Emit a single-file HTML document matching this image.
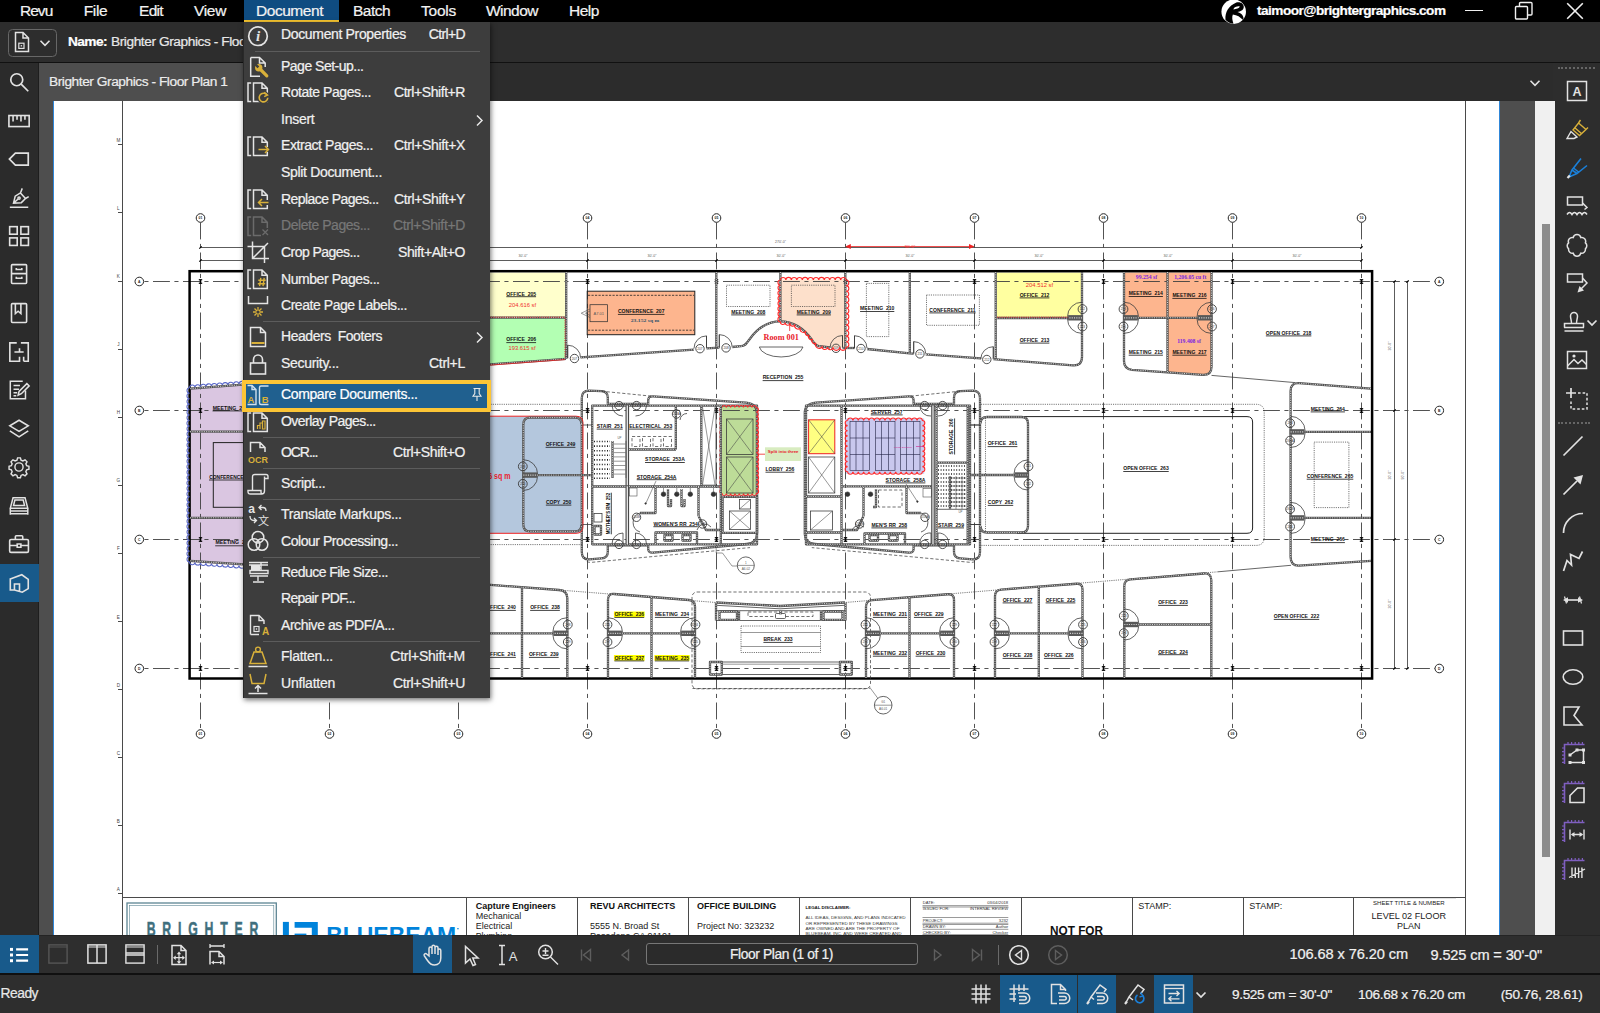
<!DOCTYPE html>
<html lang="en"><head><meta charset="utf-8"><title>Revu</title>
<style>
html,body{margin:0;padding:0;background:#2d2d2d;overflow:hidden}
body{width:1600px;height:1013px;position:relative;font-family:"Liberation Sans",sans-serif;color:#e6e6e6}
div,span,svg{position:absolute}
.t{white-space:pre;-webkit-text-stroke:.22px currentColor}
#mb{left:0;top:0;width:1600px;height:22px;background:#000}
#tb{left:0;top:22px;width:1600px;height:40px;background:#2d2d2d;border-bottom:1px solid #111}
#ls{left:0;top:63px;width:37.6px;height:873px;background:#2b2b2b;border-right:1px solid #1e1e1e}
#tabs{left:39px;top:63px;width:1514px;height:38px;background:#2c2c2c}
#tab{left:38.6px;top:62.8px;width:205px;height:38.2px;background:#4e4e4e}
#doc{left:38.6px;top:101px;width:1496.4px;height:834px;background:#4e4e4e;overflow:hidden}
#page{left:14px;top:0;width:1445.4px;height:835px;background:#fff;border-left:1.4px solid #2f86d8;border-right:1.2px solid #2f86d8}
#plan{left:-38.6px;top:-101px}
#sb{left:1535px;top:101px;width:20px;height:835px;background:#f0f0f0}
#sbt{left:6.5px;top:122.5px;width:8px;height:633px;background:#8c8c8c}
#rs{left:1555px;top:63px;width:45px;height:873px;background:#2d2d2d}
#bt{left:0;top:935px;width:1600px;height:37px;background:#2e2e2e;border-top:1px solid #242424;border-bottom:2px solid #101010}
#st{left:0;top:975px;width:1600px;height:38px;background:#2e2e2e}

.pl line,.pl path,.pl rect,.pl circle{fill:none;stroke:#333;stroke-width:.6}
.pl .n{stroke:none}
.pl .t{stroke:#444;stroke-width:.55}
.pl .t2{stroke:#333;stroke-width:.75}
.pl .t3{stroke:#222;stroke-width:1}
.pl .w{stroke:#505050;stroke-width:2.3;stroke-linejoin:round}
.pl .wh{stroke:#fff;stroke-width:.85;stroke-dasharray:1.1 1.2;fill:none;opacity:.9}
.pl .w2{stroke:#484848;stroke-width:3.6}
.pl .wh2{stroke:#fff;stroke-width:1.3;opacity:.9}
.pl .ws{stroke:#585858;stroke-width:5.4}
.pl .wsi{stroke:#d0d0d0;stroke-width:1.2;stroke-dasharray:1.1 1.2}
.pl .bo{stroke:#000;stroke-width:2.5}
.pl .d{stroke:#333;stroke-width:.7;stroke-dasharray:1.1 1.1}
.pl .d2{stroke:#222;stroke-width:1.6;stroke-dasharray:1 1.6}
.pl .da{stroke:#333;stroke-width:.7;stroke-dasharray:3.2 2}
.pl .dk{stroke:#224;stroke-width:.6}
.pl .g{stroke:#404040;stroke-width:.9;stroke-dasharray:16.9 4.5 4.1 4.5}
.pl .gc{stroke:#262626;stroke-width:1;fill:#fff}
.pl .tg{stroke:#3a3a3a;stroke-width:.9;fill:none}
.pl .dr{stroke:#3c3c3c;stroke-width:.8;fill:none}
.pl .tk{stroke:#000;stroke-width:1.15}
.pl .k{fill:#333;stroke:#333}
.pl .tk2{stroke:#000;stroke-width:1.6}
.pl .dm{stroke:#4a4a4a;stroke-width:.9}
.pl .fr{stroke:#4a4a4a;stroke-width:1}
.pl .tl{stroke:#555;stroke-width:.6}
.pl .u{stroke:#111;stroke-width:.8}
.pl .rd{stroke:#e22;stroke-width:.8}
.pl .rdd{stroke:#d22;stroke-width:.9;stroke-dasharray:1.2 1}
.pl .da2{stroke:#222;stroke-width:.8;stroke-dasharray:2.2 1.3}
.pl .rd2{stroke:#e22;stroke-width:1}
.pl .rf{fill:#e22;stroke:none}
.pl .rc{stroke:#ff2a2a;stroke-width:1.1}
.pl .bc{stroke:#5a68c8;stroke-width:1.05}
.pl .mgl{stroke:#d0208a;stroke-width:.6}
.pl .lg{stroke:#5d8593;stroke-width:1.3}
.pl .lg2{stroke:#5d8593;stroke-width:.6}
.pl .bb{fill:#0083db;stroke:none}

.pl text{white-space:pre;font-family:"Liberation Sans",sans-serif;fill:#222;stroke:none}
.pl .lb{font-weight:700;fill:#111}
.pl .gr{fill:#5a5a5a}
.pl .rl{fill:#444}
.pl .gn{fill:#222;font-weight:700}
.pl .tn{fill:#444}
.pl .rs{fill:#f03030}
.pl .rt{fill:#f03030}
.pl .rb{fill:#e8202a;font-weight:700}
.pl .rb2{fill:#e8202a;font-weight:700}
.pl .rm{fill:#e8202a;font-weight:700;font-family:"Liberation Serif",serif}
.pl .bs{fill:#33566e;font-weight:700;font-family:"Liberation Serif",serif}
.pl .pu{fill:#7a1fe0;font-weight:700;font-family:"Liberation Serif",serif}
.pl .mg{fill:#d0208a}
.pl .br{fill:#3f6f7e;font-weight:700;stroke:#3f6f7e;stroke-width:.5}
.pl .bbt{fill:#0083db;font-weight:700}
.pl .tbb{font-weight:700;fill:#111}
.pl .tbr{fill:#222}
.pl .tbs{fill:#333}

.ic{overflow:visible}
.bl{background:#185a8b}

#menu{left:243px;top:22px;width:246px;height:675.5px;background:#3d3d3d;border-left:1px solid #292929;box-shadow:1px 2px 5px rgba(0,0,0,.55)}
.mi{overflow:visible}

.sep{height:1px;background:#5c5c5c}
</style></head>
<body>
<div id="mb"></div><div id="tb"></div><div id="ls"></div><div id="tabs"></div><div id="tab"></div>
<div id="doc"><div id="page"></div><div id="plan"><svg class="pl" width="1600" height="1013" viewBox="0 0 1600 1013"><line class="fr" x1="122.5" y1="101" x2="122.5" y2="936"/>
<line class="fr" x1="1465.5" y1="101" x2="1465.5" y2="936"/>
<line class="fr" x1="122" y1="897.5" x2="1465" y2="897.5"/>
<line class="fr" x1="118" y1="144.5" x2="122" y2="144.5"/>
<text class="rl" x="118.3" y="141.8" font-size="4.6" text-anchor="middle">M</text>
<line class="fr" x1="118" y1="212.5" x2="122" y2="212.5"/>
<text class="rl" x="118.3" y="209.9" font-size="4.6" text-anchor="middle">L</text>
<line class="fr" x1="118" y1="281.5" x2="122" y2="281.5"/>
<text class="rl" x="118.3" y="278" font-size="4.6" text-anchor="middle">K</text>
<line class="fr" x1="118" y1="349.5" x2="122" y2="349.5"/>
<text class="rl" x="118.3" y="346.1" font-size="4.6" text-anchor="middle">J</text>
<line class="fr" x1="118" y1="417.5" x2="122" y2="417.5"/>
<text class="rl" x="118.3" y="414.2" font-size="4.6" text-anchor="middle">H</text>
<line class="fr" x1="118" y1="485.5" x2="122" y2="485.5"/>
<text class="rl" x="118.3" y="482.3" font-size="4.6" text-anchor="middle">G</text>
<line class="fr" x1="118" y1="553.5" x2="122" y2="553.5"/>
<text class="rl" x="118.3" y="550.4" font-size="4.6" text-anchor="middle">F</text>
<line class="fr" x1="118" y1="621.5" x2="122" y2="621.5"/>
<text class="rl" x="118.3" y="618.5" font-size="4.6" text-anchor="middle">E</text>
<line class="fr" x1="118" y1="689.5" x2="122" y2="689.5"/>
<text class="rl" x="118.3" y="686.6" font-size="4.6" text-anchor="middle">D</text>
<line class="fr" x1="118" y1="757.5" x2="122" y2="757.5"/>
<text class="rl" x="118.3" y="754.7" font-size="4.6" text-anchor="middle">C</text>
<line class="fr" x1="118" y1="825.5" x2="122" y2="825.5"/>
<text class="rl" x="118.3" y="822.8" font-size="4.6" text-anchor="middle">B</text>
<line class="fr" x1="118" y1="893.5" x2="122" y2="893.5"/>
<text class="rl" x="118.3" y="890.9" font-size="4.6" text-anchor="middle">A</text>
<g class="fill">
<path class="n" d="M189.5 387.8 L272 381.6 L272 568 L189.5 562 Z" style="fill:#dac6e1"/>
<rect class="n" x="484" y="272.5" width="81.3" height="44.8" style="fill:#ffffcc"/>
<path class="n" d="M484 317.3 L565.3 317.3 L565.3 359 L484 365 Z" style="fill:#b3ffb3"/>
<rect class="n" x="587.2" y="291.2" width="107.6" height="43.5" style="fill:#fdb58e"/>
<path class="n" d="M780.4 279.5 L846.2 279.5 L846.2 347.5 L822 347.5 C815.5 346 814.5 343.5 812 340 C804 328.5 793 321.4 780.4 321.4 Z" style="fill:#fde0cb"/>
<rect class="n" x="997" y="272.5" width="84" height="44.5" style="fill:#ffffa0"/>
<rect class="n" x="1124" y="272.5" width="87" height="45" style="fill:#fdb58e"/>
<path class="n" d="M1168 318 L1211 318 L1211 368 Q1211 375 1204 374.5 L1168 372 Z" style="fill:#fdb58e"/>
<path class="n" d="M484 416.2 L576 416.2 Q583 416.2 583 423 L583 526.5 Q583 533.3 576 533.3 L484 533.3 Z" style="fill:#b4c7dd"/>
<rect class="n" x="720.8" y="405.7" width="36.5" height="89.1" rx="3" style="fill:#bddc98"/>
<rect class="n" x="808.6" y="419.8" width="26.2" height="33.9" style="fill:#ffff82"/>
<rect class="n" x="845.6" y="418.5" width="78.6" height="55.2" style="fill:#c9c8ee"/>
<rect class="n" x="765" y="447.3" width="36" height="13.7" style="fill:#d8ecc0"/>
</g>
<line class="g" x1="200.5" y1="222.5" x2="200.5" y2="729.5"/>
<circle class="gc" cx="200.5" cy="218" r="4.3"/>
<circle class="gc" cx="200.5" cy="734" r="4.3"/>
<text class="gn" x="200.5" y="219.2" font-size="3.4" text-anchor="middle">01</text>
<text class="gn" x="200.5" y="735.2" font-size="3.4" text-anchor="middle">01</text>
<line class="g" x1="329.5" y1="222.5" x2="329.5" y2="729.5"/>
<circle class="gc" cx="329.5" cy="218" r="4.3"/>
<circle class="gc" cx="329.5" cy="734" r="4.3"/>
<text class="gn" x="329.5" y="219.2" font-size="3.4" text-anchor="middle">02</text>
<text class="gn" x="329.5" y="735.2" font-size="3.4" text-anchor="middle">02</text>
<line class="g" x1="458.5" y1="222.5" x2="458.5" y2="729.5"/>
<circle class="gc" cx="458.5" cy="218" r="4.3"/>
<circle class="gc" cx="458.5" cy="734" r="4.3"/>
<text class="gn" x="458.5" y="219.2" font-size="3.4" text-anchor="middle">03</text>
<text class="gn" x="458.5" y="735.2" font-size="3.4" text-anchor="middle">03</text>
<line class="g" x1="587.5" y1="222.5" x2="587.5" y2="729.5"/>
<circle class="gc" cx="587.5" cy="218" r="4.3"/>
<circle class="gc" cx="587.5" cy="734" r="4.3"/>
<text class="gn" x="587.5" y="219.2" font-size="3.4" text-anchor="middle">04</text>
<text class="gn" x="587.5" y="735.2" font-size="3.4" text-anchor="middle">04</text>
<line class="g" x1="716.5" y1="222.5" x2="716.5" y2="729.5"/>
<circle class="gc" cx="716.5" cy="218" r="4.3"/>
<circle class="gc" cx="716.5" cy="734" r="4.3"/>
<text class="gn" x="716.5" y="219.2" font-size="3.4" text-anchor="middle">05</text>
<text class="gn" x="716.5" y="735.2" font-size="3.4" text-anchor="middle">05</text>
<line class="g" x1="845.5" y1="222.5" x2="845.5" y2="729.5"/>
<circle class="gc" cx="845.5" cy="218" r="4.3"/>
<circle class="gc" cx="845.5" cy="734" r="4.3"/>
<text class="gn" x="845.5" y="219.2" font-size="3.4" text-anchor="middle">06</text>
<text class="gn" x="845.5" y="735.2" font-size="3.4" text-anchor="middle">06</text>
<line class="g" x1="974.5" y1="222.5" x2="974.5" y2="729.5"/>
<circle class="gc" cx="974.5" cy="218" r="4.3"/>
<circle class="gc" cx="974.5" cy="734" r="4.3"/>
<text class="gn" x="974.5" y="219.2" font-size="3.4" text-anchor="middle">07</text>
<text class="gn" x="974.5" y="735.2" font-size="3.4" text-anchor="middle">07</text>
<line class="g" x1="1103.5" y1="222.5" x2="1103.5" y2="729.5"/>
<circle class="gc" cx="1103.5" cy="218" r="4.3"/>
<circle class="gc" cx="1103.5" cy="734" r="4.3"/>
<text class="gn" x="1103.5" y="219.2" font-size="3.4" text-anchor="middle">08</text>
<text class="gn" x="1103.5" y="735.2" font-size="3.4" text-anchor="middle">08</text>
<line class="g" x1="1232.5" y1="222.5" x2="1232.5" y2="729.5"/>
<circle class="gc" cx="1232.5" cy="218" r="4.3"/>
<circle class="gc" cx="1232.5" cy="734" r="4.3"/>
<text class="gn" x="1232.5" y="219.2" font-size="3.4" text-anchor="middle">09</text>
<text class="gn" x="1232.5" y="735.2" font-size="3.4" text-anchor="middle">09</text>
<line class="g" x1="1361.5" y1="222.5" x2="1361.5" y2="729.5"/>
<circle class="gc" cx="1361.5" cy="218" r="4.3"/>
<circle class="gc" cx="1361.5" cy="734" r="4.3"/>
<text class="gn" x="1361.5" y="219.2" font-size="3.4" text-anchor="middle">10</text>
<text class="gn" x="1361.5" y="735.2" font-size="3.4" text-anchor="middle">10</text>
<line class="g" x1="144" y1="281.5" x2="1435" y2="281.5" stroke-dashoffset="21"/>
<circle class="gc" cx="139.3" cy="281.5" r="4.3"/>
<circle class="gc" cx="1439.3" cy="281.5" r="4.3"/>
<text class="gn" x="139.3" y="282.7" font-size="3.4" text-anchor="middle">A</text>
<text class="gn" x="1439.3" y="282.7" font-size="3.4" text-anchor="middle">A</text>
<line class="g" x1="144" y1="410.5" x2="1435" y2="410.5" stroke-dashoffset="21"/>
<circle class="gc" cx="139.3" cy="410.5" r="4.3"/>
<circle class="gc" cx="1439.3" cy="410.5" r="4.3"/>
<text class="gn" x="139.3" y="411.7" font-size="3.4" text-anchor="middle">B</text>
<text class="gn" x="1439.3" y="411.7" font-size="3.4" text-anchor="middle">B</text>
<line class="g" x1="144" y1="539.5" x2="1435" y2="539.5" stroke-dashoffset="21"/>
<circle class="gc" cx="139.3" cy="539.5" r="4.3"/>
<circle class="gc" cx="1439.3" cy="539.5" r="4.3"/>
<text class="gn" x="139.3" y="540.7" font-size="3.4" text-anchor="middle">C</text>
<text class="gn" x="1439.3" y="540.7" font-size="3.4" text-anchor="middle">C</text>
<line class="g" x1="144" y1="668.5" x2="1435" y2="668.5" stroke-dashoffset="21"/>
<circle class="gc" cx="139.3" cy="668.5" r="4.3"/>
<circle class="gc" cx="1439.3" cy="668.5" r="4.3"/>
<text class="gn" x="139.3" y="669.7" font-size="3.4" text-anchor="middle">D</text>
<text class="gn" x="1439.3" y="669.7" font-size="3.4" text-anchor="middle">D</text>
<line class="tk" x1="198.8" y1="279.7" x2="202.2" y2="279.7"/>
<line class="tk" x1="198.8" y1="283.3" x2="202.2" y2="283.3"/>
<line class="tk2" x1="200.5" y1="279.7" x2="200.5" y2="283.3"/>
<line class="tk" x1="198.8" y1="408.7" x2="202.2" y2="408.7"/>
<line class="tk" x1="198.8" y1="412.3" x2="202.2" y2="412.3"/>
<line class="tk2" x1="200.5" y1="408.7" x2="200.5" y2="412.3"/>
<line class="tk" x1="198.8" y1="537.7" x2="202.2" y2="537.7"/>
<line class="tk" x1="198.8" y1="541.3" x2="202.2" y2="541.3"/>
<line class="tk2" x1="200.5" y1="537.7" x2="200.5" y2="541.3"/>
<line class="tk" x1="198.8" y1="666.7" x2="202.2" y2="666.7"/>
<line class="tk" x1="198.8" y1="670.3" x2="202.2" y2="670.3"/>
<line class="tk2" x1="200.5" y1="666.7" x2="200.5" y2="670.3"/>
<line class="tk" x1="327.8" y1="279.7" x2="331.2" y2="279.7"/>
<line class="tk" x1="327.8" y1="283.3" x2="331.2" y2="283.3"/>
<line class="tk2" x1="329.5" y1="279.7" x2="329.5" y2="283.3"/>
<line class="tk" x1="327.8" y1="408.7" x2="331.2" y2="408.7"/>
<line class="tk" x1="327.8" y1="412.3" x2="331.2" y2="412.3"/>
<line class="tk2" x1="329.5" y1="408.7" x2="329.5" y2="412.3"/>
<line class="tk" x1="327.8" y1="537.7" x2="331.2" y2="537.7"/>
<line class="tk" x1="327.8" y1="541.3" x2="331.2" y2="541.3"/>
<line class="tk2" x1="329.5" y1="537.7" x2="329.5" y2="541.3"/>
<line class="tk" x1="327.8" y1="666.7" x2="331.2" y2="666.7"/>
<line class="tk" x1="327.8" y1="670.3" x2="331.2" y2="670.3"/>
<line class="tk2" x1="329.5" y1="666.7" x2="329.5" y2="670.3"/>
<line class="tk" x1="456.8" y1="279.7" x2="460.2" y2="279.7"/>
<line class="tk" x1="456.8" y1="283.3" x2="460.2" y2="283.3"/>
<line class="tk2" x1="458.5" y1="279.7" x2="458.5" y2="283.3"/>
<line class="tk" x1="456.8" y1="408.7" x2="460.2" y2="408.7"/>
<line class="tk" x1="456.8" y1="412.3" x2="460.2" y2="412.3"/>
<line class="tk2" x1="458.5" y1="408.7" x2="458.5" y2="412.3"/>
<line class="tk" x1="456.8" y1="537.7" x2="460.2" y2="537.7"/>
<line class="tk" x1="456.8" y1="541.3" x2="460.2" y2="541.3"/>
<line class="tk2" x1="458.5" y1="537.7" x2="458.5" y2="541.3"/>
<line class="tk" x1="456.8" y1="666.7" x2="460.2" y2="666.7"/>
<line class="tk" x1="456.8" y1="670.3" x2="460.2" y2="670.3"/>
<line class="tk2" x1="458.5" y1="666.7" x2="458.5" y2="670.3"/>
<line class="tk" x1="585.8" y1="279.7" x2="589.2" y2="279.7"/>
<line class="tk" x1="585.8" y1="283.3" x2="589.2" y2="283.3"/>
<line class="tk2" x1="587.5" y1="279.7" x2="587.5" y2="283.3"/>
<line class="tk" x1="585.8" y1="408.7" x2="589.2" y2="408.7"/>
<line class="tk" x1="585.8" y1="412.3" x2="589.2" y2="412.3"/>
<line class="tk2" x1="587.5" y1="408.7" x2="587.5" y2="412.3"/>
<line class="tk" x1="585.8" y1="537.7" x2="589.2" y2="537.7"/>
<line class="tk" x1="585.8" y1="541.3" x2="589.2" y2="541.3"/>
<line class="tk2" x1="587.5" y1="537.7" x2="587.5" y2="541.3"/>
<line class="tk" x1="585.8" y1="666.7" x2="589.2" y2="666.7"/>
<line class="tk" x1="585.8" y1="670.3" x2="589.2" y2="670.3"/>
<line class="tk2" x1="587.5" y1="666.7" x2="587.5" y2="670.3"/>
<line class="tk" x1="714.8" y1="279.7" x2="718.2" y2="279.7"/>
<line class="tk" x1="714.8" y1="283.3" x2="718.2" y2="283.3"/>
<line class="tk2" x1="716.5" y1="279.7" x2="716.5" y2="283.3"/>
<line class="tk" x1="714.8" y1="408.7" x2="718.2" y2="408.7"/>
<line class="tk" x1="714.8" y1="412.3" x2="718.2" y2="412.3"/>
<line class="tk2" x1="716.5" y1="408.7" x2="716.5" y2="412.3"/>
<line class="tk" x1="714.8" y1="537.7" x2="718.2" y2="537.7"/>
<line class="tk" x1="714.8" y1="541.3" x2="718.2" y2="541.3"/>
<line class="tk2" x1="716.5" y1="537.7" x2="716.5" y2="541.3"/>
<line class="tk" x1="714.8" y1="666.7" x2="718.2" y2="666.7"/>
<line class="tk" x1="714.8" y1="670.3" x2="718.2" y2="670.3"/>
<line class="tk2" x1="716.5" y1="666.7" x2="716.5" y2="670.3"/>
<line class="tk" x1="843.8" y1="279.7" x2="847.2" y2="279.7"/>
<line class="tk" x1="843.8" y1="283.3" x2="847.2" y2="283.3"/>
<line class="tk2" x1="845.5" y1="279.7" x2="845.5" y2="283.3"/>
<line class="tk" x1="843.8" y1="408.7" x2="847.2" y2="408.7"/>
<line class="tk" x1="843.8" y1="412.3" x2="847.2" y2="412.3"/>
<line class="tk2" x1="845.5" y1="408.7" x2="845.5" y2="412.3"/>
<line class="tk" x1="843.8" y1="537.7" x2="847.2" y2="537.7"/>
<line class="tk" x1="843.8" y1="541.3" x2="847.2" y2="541.3"/>
<line class="tk2" x1="845.5" y1="537.7" x2="845.5" y2="541.3"/>
<line class="tk" x1="843.8" y1="666.7" x2="847.2" y2="666.7"/>
<line class="tk" x1="843.8" y1="670.3" x2="847.2" y2="670.3"/>
<line class="tk2" x1="845.5" y1="666.7" x2="845.5" y2="670.3"/>
<line class="tk" x1="972.8" y1="279.7" x2="976.2" y2="279.7"/>
<line class="tk" x1="972.8" y1="283.3" x2="976.2" y2="283.3"/>
<line class="tk2" x1="974.5" y1="279.7" x2="974.5" y2="283.3"/>
<line class="tk" x1="972.8" y1="408.7" x2="976.2" y2="408.7"/>
<line class="tk" x1="972.8" y1="412.3" x2="976.2" y2="412.3"/>
<line class="tk2" x1="974.5" y1="408.7" x2="974.5" y2="412.3"/>
<line class="tk" x1="972.8" y1="537.7" x2="976.2" y2="537.7"/>
<line class="tk" x1="972.8" y1="541.3" x2="976.2" y2="541.3"/>
<line class="tk2" x1="974.5" y1="537.7" x2="974.5" y2="541.3"/>
<line class="tk" x1="972.8" y1="666.7" x2="976.2" y2="666.7"/>
<line class="tk" x1="972.8" y1="670.3" x2="976.2" y2="670.3"/>
<line class="tk2" x1="974.5" y1="666.7" x2="974.5" y2="670.3"/>
<line class="tk" x1="1101.8" y1="279.7" x2="1105.2" y2="279.7"/>
<line class="tk" x1="1101.8" y1="283.3" x2="1105.2" y2="283.3"/>
<line class="tk2" x1="1103.5" y1="279.7" x2="1103.5" y2="283.3"/>
<line class="tk" x1="1101.8" y1="408.7" x2="1105.2" y2="408.7"/>
<line class="tk" x1="1101.8" y1="412.3" x2="1105.2" y2="412.3"/>
<line class="tk2" x1="1103.5" y1="408.7" x2="1103.5" y2="412.3"/>
<line class="tk" x1="1101.8" y1="537.7" x2="1105.2" y2="537.7"/>
<line class="tk" x1="1101.8" y1="541.3" x2="1105.2" y2="541.3"/>
<line class="tk2" x1="1103.5" y1="537.7" x2="1103.5" y2="541.3"/>
<line class="tk" x1="1101.8" y1="666.7" x2="1105.2" y2="666.7"/>
<line class="tk" x1="1101.8" y1="670.3" x2="1105.2" y2="670.3"/>
<line class="tk2" x1="1103.5" y1="666.7" x2="1103.5" y2="670.3"/>
<line class="tk" x1="1230.8" y1="279.7" x2="1234.2" y2="279.7"/>
<line class="tk" x1="1230.8" y1="283.3" x2="1234.2" y2="283.3"/>
<line class="tk2" x1="1232.5" y1="279.7" x2="1232.5" y2="283.3"/>
<line class="tk" x1="1230.8" y1="408.7" x2="1234.2" y2="408.7"/>
<line class="tk" x1="1230.8" y1="412.3" x2="1234.2" y2="412.3"/>
<line class="tk2" x1="1232.5" y1="408.7" x2="1232.5" y2="412.3"/>
<line class="tk" x1="1230.8" y1="537.7" x2="1234.2" y2="537.7"/>
<line class="tk" x1="1230.8" y1="541.3" x2="1234.2" y2="541.3"/>
<line class="tk2" x1="1232.5" y1="537.7" x2="1232.5" y2="541.3"/>
<line class="tk" x1="1230.8" y1="666.7" x2="1234.2" y2="666.7"/>
<line class="tk" x1="1230.8" y1="670.3" x2="1234.2" y2="670.3"/>
<line class="tk2" x1="1232.5" y1="666.7" x2="1232.5" y2="670.3"/>
<line class="tk" x1="1359.8" y1="279.7" x2="1363.2" y2="279.7"/>
<line class="tk" x1="1359.8" y1="283.3" x2="1363.2" y2="283.3"/>
<line class="tk2" x1="1361.5" y1="279.7" x2="1361.5" y2="283.3"/>
<line class="tk" x1="1359.8" y1="408.7" x2="1363.2" y2="408.7"/>
<line class="tk" x1="1359.8" y1="412.3" x2="1363.2" y2="412.3"/>
<line class="tk2" x1="1361.5" y1="408.7" x2="1361.5" y2="412.3"/>
<line class="tk" x1="1359.8" y1="537.7" x2="1363.2" y2="537.7"/>
<line class="tk" x1="1359.8" y1="541.3" x2="1363.2" y2="541.3"/>
<line class="tk2" x1="1361.5" y1="537.7" x2="1361.5" y2="541.3"/>
<line class="tk" x1="1359.8" y1="666.7" x2="1363.2" y2="666.7"/>
<line class="tk" x1="1359.8" y1="670.3" x2="1363.2" y2="670.3"/>
<line class="tk2" x1="1361.5" y1="666.7" x2="1361.5" y2="670.3"/>
<line class="dm" x1="200.5" y1="247.5" x2="1361.5" y2="247.5"/>
<line class="dm" x1="200.5" y1="260.5" x2="1361.5" y2="260.5"/>
<line class="tk" x1="199.3" y1="261.7" x2="201.7" y2="259.3"/>
<text class="gr" x="265" y="256.5" font-size="3.5" text-anchor="middle">30'-0"</text>
<line class="tk" x1="328.3" y1="261.7" x2="330.7" y2="259.3"/>
<text class="gr" x="394" y="256.5" font-size="3.5" text-anchor="middle">30'-0"</text>
<line class="tk" x1="457.3" y1="261.7" x2="459.7" y2="259.3"/>
<text class="gr" x="523" y="256.5" font-size="3.5" text-anchor="middle">30'-0"</text>
<line class="tk" x1="586.3" y1="261.7" x2="588.7" y2="259.3"/>
<text class="gr" x="652" y="256.5" font-size="3.5" text-anchor="middle">30'-0"</text>
<line class="tk" x1="715.3" y1="261.7" x2="717.7" y2="259.3"/>
<text class="gr" x="781" y="256.5" font-size="3.5" text-anchor="middle">30'-0"</text>
<line class="tk" x1="844.3" y1="261.7" x2="846.7" y2="259.3"/>
<text class="gr" x="910" y="256.5" font-size="3.5" text-anchor="middle">30'-0"</text>
<line class="tk" x1="973.3" y1="261.7" x2="975.7" y2="259.3"/>
<text class="gr" x="1039" y="256.5" font-size="3.5" text-anchor="middle">30'-0"</text>
<line class="tk" x1="1102.3" y1="261.7" x2="1104.7" y2="259.3"/>
<text class="gr" x="1168" y="256.5" font-size="3.5" text-anchor="middle">30'-0"</text>
<line class="tk" x1="1231.3" y1="261.7" x2="1233.7" y2="259.3"/>
<text class="gr" x="1297" y="256.5" font-size="3.5" text-anchor="middle">30'-0"</text>
<line class="tk" x1="1360.3" y1="261.7" x2="1362.7" y2="259.3"/>
<line class="tk" x1="199.3" y1="248.7" x2="201.7" y2="246.3"/>
<line class="tk" x1="1360.3" y1="248.7" x2="1362.7" y2="246.3"/>
<text class="gr" x="780.5" y="243.4" font-size="3.5" text-anchor="middle">270'-0"</text>
<line class="dm" x1="1394.5" y1="281.5" x2="1394.5" y2="668.5"/>
<line class="dm" x1="1407.5" y1="281.5" x2="1407.5" y2="668.5"/>
<line class="tk" x1="1393.3" y1="282.7" x2="1395.7" y2="280.3"/>
<line class="tk" x1="1406.3" y1="282.7" x2="1408.7" y2="280.3"/>
<text class="gr" font-size="3.5" text-anchor="middle" transform="translate(1390.7 346) rotate(-90)">30'-0"</text>
<line class="tk" x1="1393.3" y1="411.7" x2="1395.7" y2="409.3"/>
<text class="gr" font-size="3.5" text-anchor="middle" transform="translate(1390.7 475) rotate(-90)">30'-0"</text>
<line class="tk" x1="1393.3" y1="540.7" x2="1395.7" y2="538.3"/>
<text class="gr" font-size="3.5" text-anchor="middle" transform="translate(1390.7 604) rotate(-90)">30'-0"</text>
<line class="tk" x1="1393.3" y1="669.7" x2="1395.7" y2="667.3"/>
<line class="tk" x1="1406.3" y1="669.7" x2="1408.7" y2="667.3"/>
<text class="gr" font-size="3.5" text-anchor="middle" transform="translate(1403.7 475) rotate(-90)">90'-0"</text>
<line class="rd" x1="846" y1="246.5" x2="973.5" y2="246.5"/>
<path class="rf" d="M845.3 246.5 L850.8 244 L850.8 249 Z M974.5 246.5 L969 244 L969 249 Z"/>
<text class="rt" x="909.8" y="247.6" font-size="4.2" text-anchor="middle">30'-0"</text>
<rect class="bo" x="189.6" y="271.2" width="1182.5" height="407.3"/>
<line class="w" x1="484" y1="317.6" x2="565.5" y2="317.6"/>
<line class="wh" x1="484" y1="317.6" x2="565.5" y2="317.6"/>
<line class="w" x1="566.2" y1="272" x2="566.2" y2="358.8"/>
<line class="wh" x1="566.2" y1="272" x2="566.2" y2="358.8"/>
<path class="w" d="M484 364.8 L566 358.8"/>
<path class="wh" d="M484 364.8 L566 358.8"/>
<line class="rdd" x1="484" y1="317.2" x2="565" y2="317.2"/>
<line class="rdd" x1="565" y1="318" x2="565" y2="358"/>
<path class="rd" d="M484 365.6 L565 359.6"/>
<text class="lb" x="521.2" y="295.55" font-size="5.05" text-anchor="middle" textLength="29.75" lengthAdjust="spacingAndGlyphs">OFFICE  205</text>
<line class="u" x1="506.33" y1="296.7" x2="536.07" y2="296.7"/>
<text class="rs" x="522.5" y="306.6" font-size="5.6" text-anchor="middle" textLength="27.4" lengthAdjust="spacingAndGlyphs">204.616 sf</text>
<text class="lb" x="521.2" y="341.45" font-size="5.05" text-anchor="middle" textLength="29.75" lengthAdjust="spacingAndGlyphs">OFFICE  206</text>
<line class="u" x1="506.33" y1="342.6" x2="536.07" y2="342.6"/>
<text class="rs" x="522" y="350.2" font-size="5.6" text-anchor="middle" textLength="27" lengthAdjust="spacingAndGlyphs">193.615 sf</text>
<rect class="t3" x="587.2" y="291.2" width="107.6" height="43.5"/>
<line class="da2" x1="588" y1="295.3" x2="694" y2="295.3"/>
<line class="da2" x1="588" y1="330.2" x2="694" y2="330.2"/>
<text class="lb" x="641.2" y="313.25" font-size="5.05" text-anchor="middle" textLength="46.58" lengthAdjust="spacingAndGlyphs">CONFERENCE  207</text>
<line class="u" x1="617.91" y1="314.4" x2="664.49" y2="314.4"/>
<text class="bs" x="645" y="322.4" font-size="5" text-anchor="middle" textLength="28.5" lengthAdjust="spacingAndGlyphs">23.152 sq m</text>
<rect class="t2" x="590" y="304.7" width="17.5" height="17"/>
<path class="t" d="M590 309 L581.2 313.2 L590 317.5"/>
<path class="t" d="M590 311 L585.5 313.2 L590 315.4"/>
<text class="gr" x="598.8" y="314.7" font-size="3.7" text-anchor="middle" textLength="10.5" lengthAdjust="spacingAndGlyphs">A7.01</text>
<path class="dr" d="M567.7 358.2 L567.7 345.2 A13 13 0 0 1 580.7 358.2"/>
<line class="t2" x1="567.7" y1="358.2" x2="567.7" y2="345.2"/>
<circle class="tg" cx="574.46" cy="358.5" r="4.2"/>
<text class="tn" x="574.46" y="359.6" font-size="3.2" text-anchor="middle">207</text>
<path class="w" d="M580.7 357.4 L694 349.7"/>
<path class="wh" d="M580.7 357.4 L694 349.7"/>
<path class="dr" d="M706.5 348.4 L706.5 335.9 A12.5 12.5 0 0 0 694 348.4"/>
<line class="t2" x1="706.5" y1="348.4" x2="706.5" y2="335.9"/>
<circle class="tg" cx="700" cy="348.7" r="4.2"/>
<text class="tn" x="700" y="349.8" font-size="3.2" text-anchor="middle">207</text>
<path class="w" d="M706.5 348.4 L719.3 347.6"/>
<path class="wh" d="M706.5 348.4 L719.3 347.6"/>
<line class="w" x1="716.3" y1="272" x2="716.3" y2="348"/>
<line class="wh" x1="716.3" y1="272" x2="716.3" y2="348"/>
<path class="dr" d="M719.3 347.6 L719.3 334.6 A13 13 0 0 1 732.3 347.6"/>
<line class="t2" x1="719.3" y1="347.6" x2="719.3" y2="334.6"/>
<circle class="tg" cx="726.06" cy="347.9" r="4.2"/>
<text class="tn" x="726.06" y="349" font-size="3.2" text-anchor="middle">208</text>
<path class="w" d="M732.3 347 L741 346.2"/>
<path class="wh" d="M732.3 347 L741 346.2"/>
<path class="w" d="M741 346.2 C745 346 746.5 343.5 749 340 C757 328.5 768 321.4 780.4 321.4 C793 321.4 804 328.5 812 340 C814.5 343.5 815.5 346 819.4 346.2"/>
<path class="wh" d="M741 346.2 C745 346 746.5 343.5 749 340 C757 328.5 768 321.4 780.4 321.4 C793 321.4 804 328.5 812 340 C814.5 343.5 815.5 346 819.4 346.2"/>
<path class="w" d="M819.4 346.2 L830 347.5"/>
<path class="wh" d="M819.4 346.2 L830 347.5"/>
<line class="w" x1="780.4" y1="272" x2="780.4" y2="321.4"/>
<line class="wh" x1="780.4" y1="272" x2="780.4" y2="321.4"/>
<rect class="d" x="726.5" y="285.2" width="43.5" height="21.3"/>
<rect class="d" x="791.4" y="285.2" width="43.6" height="21.3"/>
<text class="lb" x="748.3" y="313.75" font-size="5.05" text-anchor="middle" textLength="34.24" lengthAdjust="spacingAndGlyphs">MEETING  208</text>
<line class="u" x1="731.18" y1="314.9" x2="765.42" y2="314.9"/>
<text class="lb" x="813.8" y="313.75" font-size="5.05" text-anchor="middle" textLength="34.24" lengthAdjust="spacingAndGlyphs">MEETING  209</text>
<line class="u" x1="796.68" y1="314.9" x2="830.92" y2="314.9"/>
<path class="dr" d="M842.5 348 L842.5 335.5 A12.5 12.5 0 0 0 830 348"/>
<line class="t2" x1="842.5" y1="348" x2="842.5" y2="335.5"/>
<circle class="tg" cx="836" cy="348.3" r="4.2"/>
<text class="tn" x="836" y="349.4" font-size="3.2" text-anchor="middle">209</text>
<line class="w" x1="845.3" y1="272" x2="845.3" y2="348.5"/>
<line class="wh" x1="845.3" y1="272" x2="845.3" y2="348.5"/>
<line class="w" x1="842.5" y1="348" x2="854.5" y2="348"/>
<line class="wh" x1="842.5" y1="348" x2="854.5" y2="348"/>
<path class="rc" d="M780.4 280 A2.75 2.75 0 0 1 785.88 280 A2.75 2.75 0 0 1 791.37 280 A2.75 2.75 0 0 1 796.85 280 A2.75 2.75 0 0 1 802.33 280 A2.75 2.75 0 0 1 807.82 280 A2.75 2.75 0 0 1 813.3 280 A2.75 2.75 0 0 1 818.78 280 A2.75 2.75 0 0 1 824.27 280 A2.75 2.75 0 0 1 829.75 280 A2.75 2.75 0 0 1 835.23 280 A2.75 2.75 0 0 1 840.72 280 A2.75 2.75 0 0 1 846.2 280 A2.81 2.81 0 0 1 846.2 285.61 A2.81 2.81 0 0 1 846.2 291.22 A2.81 2.81 0 0 1 846.2 296.82 A2.81 2.81 0 0 1 846.2 302.43 A2.81 2.81 0 0 1 846.2 308.04 A2.81 2.81 0 0 1 846.2 313.65 A2.81 2.81 0 0 1 846.2 319.26 A2.81 2.81 0 0 1 846.2 324.87 A2.81 2.81 0 0 1 846.2 330.48 A2.81 2.81 0 0 1 846.2 336.08 A2.81 2.81 0 0 1 846.2 341.69 A2.81 2.81 0 0 1 846.2 347.3 A3.31 3.31 0 0 1 839.6 347.3 A3.31 3.31 0 0 1 833 347.3 A2.76 2.76 0 0 1 827.5 347.05 A2.76 2.76 0 0 1 822 346.8 A3.56 3.56 0 0 1 816 343 A2.61 2.61 0 0 1 812.67 339 A2.61 2.61 0 0 1 809.33 335 A2.61 2.61 0 0 1 806 331 A3.23 3.23 0 0 1 800.5 327.65 A3.23 3.23 0 0 1 795 324.3 A2.48 2.48 0 0 1 790.13 323.47 A2.48 2.48 0 0 1 785.27 322.63 A2.48 2.48 0 0 1 780.4 321.8 A2.62 2.62 0 0 1 780.4 316.57 A2.62 2.62 0 0 1 780.4 311.35 A2.62 2.62 0 0 1 780.4 306.12 A2.62 2.62 0 0 1 780.4 300.9 A2.62 2.62 0 0 1 780.4 295.68 A2.62 2.62 0 0 1 780.4 290.45 A2.62 2.62 0 0 1 780.4 285.23 A2.62 2.62 0 0 1 780.4 280"/>
<line class="rd" x1="789.7" y1="322.5" x2="789.7" y2="331"/>
<text class="rm" x="781.2" y="340.3" font-size="8.3" text-anchor="middle" textLength="35.3" lengthAdjust="spacingAndGlyphs">Room 001</text>
<path class="t2" d="M759.3 347 L803 347 A22 11.3 0 0 1 759.3 347 Z" style="fill:#fff"/>
<text class="lb" x="783" y="379.45" font-size="5.05" text-anchor="middle" textLength="40.69" lengthAdjust="spacingAndGlyphs">RECEPTION  255</text>
<line class="u" x1="762.65" y1="380.6" x2="803.35" y2="380.6"/>
<path class="dr" d="M854.5 348.2 L854.5 335.7 A12.5 12.5 0 0 1 867 348.2"/>
<line class="t2" x1="854.5" y1="348.2" x2="854.5" y2="335.7"/>
<circle class="tg" cx="861" cy="348.5" r="4.2"/>
<text class="tn" x="861" y="349.6" font-size="3.2" text-anchor="middle">210</text>
<path class="w" d="M867 349 L909.8 353.3 L913.7 353.6"/>
<path class="wh" d="M867 349 L909.8 353.3 L913.7 353.6"/>
<line class="w" x1="909.8" y1="272" x2="909.8" y2="353.5"/>
<line class="wh" x1="909.8" y1="272" x2="909.8" y2="353.5"/>
<rect class="d" x="866.4" y="283.4" width="22.4" height="53.2"/>
<text class="lb" x="877.2" y="310.35" font-size="5.05" text-anchor="middle" textLength="34.24" lengthAdjust="spacingAndGlyphs">MEETING  210</text>
<line class="u" x1="860.08" y1="311.5" x2="894.32" y2="311.5"/>
<path class="dr" d="M913.7 353.6 L913.7 341.6 A12 12 0 0 1 925.7 353.6"/>
<line class="t2" x1="913.7" y1="353.6" x2="913.7" y2="341.6"/>
<circle class="tg" cx="919.94" cy="353.9" r="4.2"/>
<text class="tn" x="919.94" y="355" font-size="3.2" text-anchor="middle">211</text>
<path class="w" d="M925.7 354.3 L981 358.4"/>
<path class="wh" d="M925.7 354.3 L981 358.4"/>
<rect class="d" x="926.5" y="295" width="52.9" height="30.3"/>
<text class="lb" x="952.5" y="311.75" font-size="5.05" text-anchor="middle" textLength="46.31" lengthAdjust="spacingAndGlyphs">CONFERENCE  211</text>
<line class="u" x1="929.35" y1="312.9" x2="975.65" y2="312.9"/>
<path class="dr" d="M993.3 359.2 L993.3 346.7 A12.5 12.5 0 0 0 980.8 359.2"/>
<line class="t2" x1="993.3" y1="359.2" x2="993.3" y2="346.7"/>
<circle class="tg" cx="986.8" cy="359.5" r="4.2"/>
<text class="tn" x="986.8" y="360.6" font-size="3.2" text-anchor="middle">212</text>
<line class="w" x1="995.7" y1="272" x2="995.7" y2="359.5"/>
<line class="wh" x1="995.7" y1="272" x2="995.7" y2="359.5"/>
<line class="w" x1="997" y1="318" x2="1081" y2="318"/>
<line class="wh" x1="997" y1="318" x2="1081" y2="318"/>
<line class="rdd" x1="997" y1="317.2" x2="1081" y2="317.2"/>
<path class="w" d="M993.3 359.2 L1073 365.3 Q1082 366 1082 357 L1082 272"/>
<path class="wh" d="M993.3 359.2 L1073 365.3 Q1082 366 1082 357 L1082 272"/>
<text class="lb" x="1034.5" y="296.75" font-size="5.05" text-anchor="middle" textLength="29.75" lengthAdjust="spacingAndGlyphs">OFFICE  212</text>
<line class="u" x1="1019.63" y1="297.9" x2="1049.37" y2="297.9"/>
<text class="rs" x="1039.5" y="287" font-size="5.6" text-anchor="middle" textLength="27.4" lengthAdjust="spacingAndGlyphs">204.512 sf</text>
<text class="lb" x="1034.5" y="341.95" font-size="5.05" text-anchor="middle" textLength="29.75" lengthAdjust="spacingAndGlyphs">OFFICE  213</text>
<line class="u" x1="1019.63" y1="343.1" x2="1049.37" y2="343.1"/>
<path class="dr" d="M1082 302.2 A14.5 14.5 0 0 0 1067.5 316.7 M1067.5 318.9 A14.5 14.5 0 0 0 1082 333.4"/>
<line class="ws" x1="1083" y1="317.8" x2="1068.1" y2="317.8"/>
<line class="wsi" x1="1082" y1="317.8" x2="1069" y2="317.8"/>
<circle class="tg" cx="1082.5" cy="309.1" r="4.4"/>
<circle class="tg" cx="1082.5" cy="326.5" r="4.4"/>
<text class="tn" x="1082.5" y="310.2" font-size="3.2" text-anchor="middle">212</text>
<text class="tn" x="1082.5" y="327.6" font-size="3.2" text-anchor="middle">213</text>
<path class="w" d="M1124 272 L1124 361 Q1124 369 1132 369.8 L1203 374.8 Q1211.5 375.2 1211.5 367 L1211.5 272"/>
<path class="wh" d="M1124 272 L1124 361 Q1124 369 1132 369.8 L1203 374.8 Q1211.5 375.2 1211.5 367 L1211.5 272"/>
<line class="w" x1="1167.5" y1="272" x2="1167.5" y2="372.5"/>
<line class="wh" x1="1167.5" y1="272" x2="1167.5" y2="372.5"/>
<line class="w" x1="1124" y1="317.8" x2="1211.5" y2="317.8"/>
<line class="wh" x1="1124" y1="317.8" x2="1211.5" y2="317.8"/>
<path class="dr" d="M1124 302.2 A14.5 14.5 0 0 1 1138.5 316.7 M1138.5 318.9 A14.5 14.5 0 0 1 1124 333.4"/>
<line class="ws" x1="1123" y1="317.8" x2="1137.9" y2="317.8"/>
<line class="wsi" x1="1124" y1="317.8" x2="1137" y2="317.8"/>
<circle class="tg" cx="1123.5" cy="309.1" r="4.4"/>
<circle class="tg" cx="1123.5" cy="326.5" r="4.4"/>
<text class="tn" x="1123.5" y="310.2" font-size="3.2" text-anchor="middle">214</text>
<text class="tn" x="1123.5" y="327.6" font-size="3.2" text-anchor="middle">215</text>
<path class="dr" d="M1211.5 302.2 A14.5 14.5 0 0 0 1197 316.7 M1197 318.9 A14.5 14.5 0 0 0 1211.5 333.4"/>
<line class="ws" x1="1212.5" y1="317.8" x2="1197.6" y2="317.8"/>
<line class="wsi" x1="1211.5" y1="317.8" x2="1198.5" y2="317.8"/>
<circle class="tg" cx="1212" cy="309.1" r="4.4"/>
<circle class="tg" cx="1212" cy="326.5" r="4.4"/>
<text class="tn" x="1212" y="310.2" font-size="3.2" text-anchor="middle">216</text>
<text class="tn" x="1212" y="327.6" font-size="3.2" text-anchor="middle">217</text>
<text class="lb" x="1145.8" y="295.35" font-size="5.05" text-anchor="middle" textLength="34.24" lengthAdjust="spacingAndGlyphs">MEETING  214</text>
<line class="u" x1="1128.68" y1="296.5" x2="1162.92" y2="296.5"/>
<text class="lb" x="1189.5" y="297.25" font-size="5.05" text-anchor="middle" textLength="34.24" lengthAdjust="spacingAndGlyphs">MEETING  216</text>
<line class="u" x1="1172.38" y1="298.4" x2="1206.62" y2="298.4"/>
<text class="lb" x="1145.8" y="354.05" font-size="5.05" text-anchor="middle" textLength="34.24" lengthAdjust="spacingAndGlyphs">MEETING  215</text>
<line class="u" x1="1128.68" y1="355.2" x2="1162.92" y2="355.2"/>
<text class="lb" x="1189.5" y="354.05" font-size="5.05" text-anchor="middle" textLength="34.24" lengthAdjust="spacingAndGlyphs">MEETING  217</text>
<line class="u" x1="1172.38" y1="355.2" x2="1206.62" y2="355.2"/>
<text class="pu" x="1146.5" y="278.7" font-size="5.6" text-anchor="middle" textLength="21.3" lengthAdjust="spacingAndGlyphs">99.254 sf</text>
<text class="pu" x="1190.3" y="278.7" font-size="5.6" text-anchor="middle" textLength="32" lengthAdjust="spacingAndGlyphs">1,206.05 cu ft</text>
<text class="pu" x="1189.1" y="343.1" font-size="5.6" text-anchor="middle" textLength="23.7" lengthAdjust="spacingAndGlyphs">119.408 sf</text>
<path class="t2" d="M1211.5 375.4 L1295 382.6"/>
<text class="lb" x="1288.6" y="334.75" font-size="5.05" text-anchor="middle" textLength="45.46" lengthAdjust="spacingAndGlyphs">OPEN OFFICE  218</text>
<line class="u" x1="1265.87" y1="335.9" x2="1311.33" y2="335.9"/>
<path class="bc" d="M189.5 387.8 A2.77 2.77 0 0 1 195 387.39 A2.77 2.77 0 0 1 200.5 386.97 A2.77 2.77 0 0 1 206 386.56 A2.77 2.77 0 0 1 211.5 386.15 A2.77 2.77 0 0 1 217 385.73 A2.77 2.77 0 0 1 222.5 385.32 A2.77 2.77 0 0 1 228 384.91 A2.77 2.77 0 0 1 233.5 384.49 A2.77 2.77 0 0 1 239 384.08 A2.77 2.77 0 0 1 244.5 383.67 A2.77 2.77 0 0 1 250 383.25 A2.77 2.77 0 0 1 255.5 382.84 A2.77 2.77 0 0 1 261 382.43 A2.77 2.77 0 0 1 266.5 382.01 A2.77 2.77 0 0 1 272 381.6 A2.75 2.75 0 0 1 272 387.08 A2.75 2.75 0 0 1 272 392.56 A2.75 2.75 0 0 1 272 398.05 A2.75 2.75 0 0 1 272 403.53 A2.75 2.75 0 0 1 272 409.01 A2.75 2.75 0 0 1 272 414.49 A2.75 2.75 0 0 1 272 419.98 A2.75 2.75 0 0 1 272 425.46 A2.75 2.75 0 0 1 272 430.94 A2.75 2.75 0 0 1 272 436.42 A2.75 2.75 0 0 1 272 441.91 A2.75 2.75 0 0 1 272 447.39 A2.75 2.75 0 0 1 272 452.87 A2.75 2.75 0 0 1 272 458.35 A2.75 2.75 0 0 1 272 463.84 A2.75 2.75 0 0 1 272 469.32 A2.75 2.75 0 0 1 272 474.8 A2.75 2.75 0 0 1 272 480.28 A2.75 2.75 0 0 1 272 485.76 A2.75 2.75 0 0 1 272 491.25 A2.75 2.75 0 0 1 272 496.73 A2.75 2.75 0 0 1 272 502.21 A2.75 2.75 0 0 1 272 507.69 A2.75 2.75 0 0 1 272 513.18 A2.75 2.75 0 0 1 272 518.66 A2.75 2.75 0 0 1 272 524.14 A2.75 2.75 0 0 1 272 529.62 A2.75 2.75 0 0 1 272 535.11 A2.75 2.75 0 0 1 272 540.59 A2.75 2.75 0 0 1 272 546.07 A2.75 2.75 0 0 1 272 551.55 A2.75 2.75 0 0 1 272 557.04 A2.75 2.75 0 0 1 272 562.52 A2.75 2.75 0 0 1 272 568 A2.77 2.77 0 0 1 266.5 567.6 A2.77 2.77 0 0 1 261 567.2 A2.77 2.77 0 0 1 255.5 566.8 A2.77 2.77 0 0 1 250 566.4 A2.77 2.77 0 0 1 244.5 566 A2.77 2.77 0 0 1 239 565.6 A2.77 2.77 0 0 1 233.5 565.2 A2.77 2.77 0 0 1 228 564.8 A2.77 2.77 0 0 1 222.5 564.4 A2.77 2.77 0 0 1 217 564 A2.77 2.77 0 0 1 211.5 563.6 A2.77 2.77 0 0 1 206 563.2 A2.77 2.77 0 0 1 200.5 562.8 A2.77 2.77 0 0 1 195 562.4 A2.77 2.77 0 0 1 189.5 562 A2.73 2.73 0 0 1 189.5 556.56 A2.73 2.73 0 0 1 189.5 551.11 A2.73 2.73 0 0 1 189.5 545.67 A2.73 2.73 0 0 1 189.5 540.23 A2.73 2.73 0 0 1 189.5 534.78 A2.73 2.73 0 0 1 189.5 529.34 A2.73 2.73 0 0 1 189.5 523.89 A2.73 2.73 0 0 1 189.5 518.45 A2.73 2.73 0 0 1 189.5 513.01 A2.73 2.73 0 0 1 189.5 507.56 A2.73 2.73 0 0 1 189.5 502.12 A2.73 2.73 0 0 1 189.5 496.68 A2.73 2.73 0 0 1 189.5 491.23 A2.73 2.73 0 0 1 189.5 485.79 A2.73 2.73 0 0 1 189.5 480.34 A2.73 2.73 0 0 1 189.5 474.9 A2.73 2.73 0 0 1 189.5 469.46 A2.73 2.73 0 0 1 189.5 464.01 A2.73 2.73 0 0 1 189.5 458.57 A2.73 2.73 0 0 1 189.5 453.12 A2.73 2.73 0 0 1 189.5 447.68 A2.73 2.73 0 0 1 189.5 442.24 A2.73 2.73 0 0 1 189.5 436.79 A2.73 2.73 0 0 1 189.5 431.35 A2.73 2.73 0 0 1 189.5 425.91 A2.73 2.73 0 0 1 189.5 420.46 A2.73 2.73 0 0 1 189.5 415.02 A2.73 2.73 0 0 1 189.5 409.58 A2.73 2.73 0 0 1 189.5 404.13 A2.73 2.73 0 0 1 189.5 398.69 A2.73 2.73 0 0 1 189.5 393.24 A2.73 2.73 0 0 1 189.5 387.8"/>
<path class="w" d="M190.3 388.6 L262.3 383.2"/>
<path class="wh" d="M190.3 388.6 L262.3 383.2"/>
<path class="w" d="M190.3 560.8 L262.3 565.6"/>
<path class="wh" d="M190.3 560.8 L262.3 565.6"/>
<line class="w" x1="190" y1="431.7" x2="272" y2="431.7"/>
<line class="wh" x1="190" y1="431.7" x2="272" y2="431.7"/>
<line class="w" x1="190" y1="517.8" x2="272" y2="517.8"/>
<line class="wh" x1="190" y1="517.8" x2="272" y2="517.8"/>
<rect class="t3" x="213.3" y="442.6" width="33.7" height="64.7"/>
<line class="u" x1="212.5" y1="410.9" x2="244" y2="410.9"/>
<text class="lb" x="212.8" y="409.7" font-size="4.7" text-anchor="start" textLength="35" lengthAdjust="spacingAndGlyphs">MEETING  267</text>
<line class="u" x1="209" y1="480" x2="244" y2="480"/>
<text class="lb" x="209.3" y="478.5" font-size="4.7" text-anchor="start" textLength="45" lengthAdjust="spacingAndGlyphs">CONFERENCE  268</text>
<line class="u" x1="215.2" y1="545.8" x2="244" y2="545.8"/>
<text class="lb" x="215.5" y="543.8" font-size="4.7" text-anchor="start" textLength="35" lengthAdjust="spacingAndGlyphs">MEETING  269</text>
<path class="w" d="M1371 388.6 L1299 383.2 Q1290.6 382.6 1290.6 391 L1290.6 557 Q1290.6 566 1299 565.6 L1371 560.8"/>
<path class="wh" d="M1371 388.6 L1299 383.2 Q1290.6 382.6 1290.6 391 L1290.6 557 Q1290.6 566 1299 565.6 L1371 560.8"/>
<line class="w" x1="1290.6" y1="431.9" x2="1371" y2="431.9"/>
<line class="wh" x1="1290.6" y1="431.9" x2="1371" y2="431.9"/>
<line class="w" x1="1290.6" y1="517.9" x2="1371" y2="517.9"/>
<line class="wh" x1="1290.6" y1="517.9" x2="1371" y2="517.9"/>
<path class="dr" d="M1290.6 416.3 A14.5 14.5 0 0 1 1305.1 430.8 M1305.1 433 A14.5 14.5 0 0 1 1290.6 447.5"/>
<line class="ws" x1="1289.6" y1="431.9" x2="1304.5" y2="431.9"/>
<line class="wsi" x1="1290.6" y1="431.9" x2="1303.6" y2="431.9"/>
<circle class="tg" cx="1290.1" cy="423.2" r="4.4"/>
<circle class="tg" cx="1290.1" cy="440.6" r="4.4"/>
<text class="tn" x="1290.1" y="424.3" font-size="3.2" text-anchor="middle">264</text>
<text class="tn" x="1290.1" y="441.7" font-size="3.2" text-anchor="middle">265A</text>
<path class="dr" d="M1290.6 502.3 A14.5 14.5 0 0 1 1305.1 516.8 M1305.1 519 A14.5 14.5 0 0 1 1290.6 533.5"/>
<line class="ws" x1="1289.6" y1="517.9" x2="1304.5" y2="517.9"/>
<line class="wsi" x1="1290.6" y1="517.9" x2="1303.6" y2="517.9"/>
<circle class="tg" cx="1290.1" cy="509.2" r="4.4"/>
<circle class="tg" cx="1290.1" cy="526.6" r="4.4"/>
<text class="tn" x="1290.1" y="510.3" font-size="3.2" text-anchor="middle">265B</text>
<text class="tn" x="1290.1" y="527.7" font-size="3.2" text-anchor="middle">266</text>
<rect class="d" x="1314.2" y="442.1" width="34.7" height="65.5"/>
<text class="lb" x="1327.8" y="410.75" font-size="5.05" text-anchor="middle" textLength="34.24" lengthAdjust="spacingAndGlyphs">MEETING  264</text>
<line class="u" x1="1310.68" y1="411.9" x2="1344.92" y2="411.9"/>
<text class="lb" x="1330" y="478.05" font-size="5.05" text-anchor="middle" textLength="46.58" lengthAdjust="spacingAndGlyphs">CONFERENCE  265</text>
<line class="u" x1="1306.71" y1="479.2" x2="1353.29" y2="479.2"/>
<text class="lb" x="1327.8" y="541.45" font-size="5.05" text-anchor="middle" textLength="34.24" lengthAdjust="spacingAndGlyphs">MEETING  266</text>
<line class="u" x1="1310.68" y1="542.6" x2="1344.92" y2="542.6"/>
<path class="t2" d="M1218 571.8 L1291 565.3"/>
<text class="lb" x="1296.5" y="618.25" font-size="5.05" text-anchor="middle" textLength="45.46" lengthAdjust="spacingAndGlyphs">OPEN OFFICE  222</text>
<line class="u" x1="1273.77" y1="619.4" x2="1319.23" y2="619.4"/>
<path class="w" d="M581.8 398 Q581.8 390.6 589 390.6 L601.5 391.2 Q607.8 391.5 607.8 397.5 L607.8 403.8 L648.2 403.8 L648.2 400.5 Q648.2 396 653 396.3 L746 402.6 Q757 403.8 757 413 L757 534 Q757 543 747 544 L653 552.6 Q648.2 553 648.2 549 L648.2 545.4 L607.8 545.4 L607.8 552 Q607.8 558 601.5 558.4 L589 559.4 Q581.8 559.6 581.8 552 Z"/>
<path class="wh" d="M581.8 398 Q581.8 390.6 589 390.6 L601.5 391.2 Q607.8 391.5 607.8 397.5 L607.8 403.8 L648.2 403.8 L648.2 400.5 Q648.2 396 653 396.3 L746 402.6 Q757 403.8 757 413 L757 534 Q757 543 747 544 L653 552.6 Q648.2 553 648.2 549 L648.2 545.4 L607.8 545.4 L607.8 552 Q607.8 558 601.5 558.4 L589 559.4 Q581.8 559.6 581.8 552 Z"/>
<path class="da" d="M601.5 391.2 L653 396.3"/>
<path class="da" d="M584.5 557 Q585 562.5 591 562.4 L650 556.8 L750 547.6"/>
<rect class="w" x="592.2" y="405.7" width="164.8" height="138.6" style="fill:none"/>
<rect class="wh" x="592.2" y="405.7" width="164.8" height="138.6"/>
<line class="w2" x1="627.3" y1="405.7" x2="627.3" y2="486.5"/>
<line class="wh2" x1="627.3" y1="405.7" x2="627.3" y2="486.5"/>
<line class="w" x1="592.2" y1="486.5" x2="720" y2="486.5"/>
<line class="wh" x1="592.2" y1="486.5" x2="720" y2="486.5"/>
<line class="w" x1="629" y1="449.5" x2="676" y2="449.5"/>
<line class="wh" x1="629" y1="449.5" x2="676" y2="449.5"/>
<line class="w" x1="675.8" y1="405.7" x2="675.8" y2="449.5"/>
<line class="wh" x1="675.8" y1="405.7" x2="675.8" y2="449.5"/>
<line class="w" x1="701.3" y1="405.7" x2="701.3" y2="486.5"/>
<line class="wh" x1="701.3" y1="405.7" x2="701.3" y2="486.5"/>
<line class="t2" x1="716" y1="405.7" x2="716" y2="486.5"/>
<path class="t" d="M702.5 407 L715 485 L702.5 485 L715 407"/>
<line class="w2" x1="627.3" y1="486.5" x2="627.3" y2="544.3"/>
<line class="wh2" x1="627.3" y1="486.5" x2="627.3" y2="544.3"/>
<text class="lb" x="609.7" y="427.95" font-size="5.05" text-anchor="middle" textLength="26.01" lengthAdjust="spacingAndGlyphs">STAIR  251</text>
<line class="u" x1="596.7" y1="429.1" x2="622.7" y2="429.1"/>
<text class="lb" x="650.7" y="427.95" font-size="5.05" text-anchor="middle" textLength="43.12" lengthAdjust="spacingAndGlyphs">ELECTRICAL  253</text>
<line class="u" x1="629.14" y1="429.1" x2="672.26" y2="429.1"/>
<line class="d2" x1="594" y1="441.5" x2="610" y2="441.5"/>
<line class="d2" x1="594" y1="446.1" x2="610" y2="446.1"/>
<line class="d2" x1="594" y1="450.7" x2="610" y2="450.7"/>
<line class="d2" x1="594" y1="455.3" x2="610" y2="455.3"/>
<line class="d2" x1="594" y1="459.9" x2="610" y2="459.9"/>
<line class="d2" x1="594" y1="464.5" x2="610" y2="464.5"/>
<line class="d2" x1="594" y1="469.1" x2="610" y2="469.1"/>
<line class="d2" x1="594" y1="473.7" x2="610" y2="473.7"/>
<line class="d2" x1="594" y1="478.3" x2="610" y2="478.3"/>
<line class="t" x1="614" y1="444" x2="625.5" y2="444"/>
<line class="t" x1="614" y1="448.3" x2="625.5" y2="448.3"/>
<line class="t" x1="614" y1="452.6" x2="625.5" y2="452.6"/>
<line class="t" x1="614" y1="456.9" x2="625.5" y2="456.9"/>
<line class="t" x1="614" y1="461.2" x2="625.5" y2="461.2"/>
<line class="t" x1="614" y1="465.5" x2="625.5" y2="465.5"/>
<line class="t" x1="614" y1="469.8" x2="625.5" y2="469.8"/>
<line class="t" x1="614" y1="474.1" x2="625.5" y2="474.1"/>
<line class="w" x1="612.5" y1="441" x2="612.5" y2="478"/>
<line class="wh" x1="612.5" y1="441" x2="612.5" y2="478"/>
<line class="t" x1="626" y1="441" x2="626" y2="478"/>
<text class="gr" x="619.5" y="438.8" font-size="2.8" text-anchor="middle">UP</text>
<rect class="da" x="632" y="436.5" width="8" height="10"/>
<rect class="da" x="642.5" y="436.5" width="8" height="10"/>
<rect class="da" x="653" y="436.5" width="8" height="10"/>
<rect class="da" x="663.5" y="436.5" width="8" height="10"/>
<text class="lb" x="664.9" y="461.35" font-size="5.05" text-anchor="middle" textLength="39.76" lengthAdjust="spacingAndGlyphs">STORAGE  253A</text>
<line class="u" x1="645.02" y1="462.5" x2="684.78" y2="462.5"/>
<text class="lb" x="656.6" y="478.55" font-size="5.05" text-anchor="middle" textLength="39.76" lengthAdjust="spacingAndGlyphs">STORAGE  254A</text>
<line class="u" x1="636.72" y1="479.7" x2="676.48" y2="479.7"/>
<line class="t" x1="656" y1="481" x2="646" y2="503"/>
<circle class="k" cx="645.6" cy="503.5" r="0.8"/>
<path class="dr" d="M612 405.7 A11 11 0 0 0 623 416"/>
<circle class="tg" cx="619" cy="405.6" r="4.2"/>
<text class="tn" x="619" y="406.7" font-size="3.2" text-anchor="middle">251</text>
<path class="dr" d="M646.5 405.7 A11 11 0 0 1 635.5 416"/>
<circle class="tg" cx="636.5" cy="405.6" r="4.2"/>
<text class="tn" x="636.5" y="406.7" font-size="3.2" text-anchor="middle">253</text>
<path class="dr" d="M687 413.5 A7 7 0 0 0 680 420"/>
<circle class="tg" cx="676.5" cy="414" r="4.2"/>
<text class="tn" x="676.5" y="415.1" font-size="3.2" text-anchor="middle">253A</text>
<path class="dr" d="M612 544.3 A11 11 0 0 1 623 533 L623 544"/>
<circle class="tg" cx="619" cy="544.4" r="4.2"/>
<text class="tn" x="619" y="545.5" font-size="3.2" text-anchor="middle">252</text>
<path class="dr" d="M646.5 544.3 A11 11 0 0 0 635.5 533 L635.5 544"/>
<circle class="tg" cx="636.5" cy="544.4" r="4.2"/>
<text class="tn" x="636.5" y="545.5" font-size="3.2" text-anchor="middle">254</text>
<g transform="rotate(-90 608.4 513.5)">
<text class="lb" x="608.4" y="515.25" font-size="5.05" text-anchor="middle" textLength="41.6" lengthAdjust="spacingAndGlyphs">MOTHER'S RM  252</text>
<line class="u" x1="587.6" y1="516.4" x2="629.2" y2="516.4"/>
</g>
<rect class="t2" x="594" y="513.5" width="8" height="8.5" style="fill:none"/>
<rect class="w" x="594.5" y="526" width="6.5" height="8.5" style="fill:none"/>
<rect class="wh" x="594.5" y="526" width="6.5" height="8.5"/>
<rect class="t" x="629.5" y="488" width="7.5" height="8" style="fill:none"/>
<path class="w" d="M655.5 487 L655.5 513 L640 513"/>
<path class="wh" d="M655.5 487 L655.5 513 L640 513"/>
<path class="dr" d="M640 513 A10 10 0 0 0 640 532"/>
<circle class="tg" cx="636.5" cy="517.3" r="4.2"/>
<text class="tn" x="636.5" y="518.4" font-size="3.2" text-anchor="middle">254B</text>
<circle class="k" cx="663.5" cy="494.2" r="2.3"/>
<line class="t" x1="663.5" y1="488" x2="663.5" y2="492"/>
<circle class="k" cx="676.8" cy="494.2" r="2.3"/>
<line class="t" x1="676.8" y1="488" x2="676.8" y2="492"/>
<circle class="k" cx="690.3" cy="494.2" r="2.3"/>
<line class="t" x1="690.3" y1="488" x2="690.3" y2="492"/>
<circle class="k" cx="713.5" cy="494.2" r="2.3"/>
<line class="t" x1="713.5" y1="488" x2="713.5" y2="492"/>
<path class="w" d="M668 489 L668 506 L671 506 L671 499"/>
<path class="wh" d="M668 489 L668 506 L671 506 L671 499"/>
<path class="w" d="M681.5 489 L681.5 506 L684.5 506 L684.5 499"/>
<path class="wh" d="M681.5 489 L681.5 506 L684.5 506 L684.5 499"/>
<line class="w" x1="698.5" y1="487" x2="698.5" y2="516"/>
<line class="wh" x1="698.5" y1="487" x2="698.5" y2="516"/>
<path class="w" d="M698.5 516 L706 530 L722 530"/>
<path class="wh" d="M698.5 516 L706 530 L722 530"/>
<path class="dr" d="M697 530 A8 8 0 0 1 711 527"/>
<circle class="tg" cx="702.5" cy="524" r="4.2"/>
<text class="tn" x="702.5" y="525.1" font-size="3.2" text-anchor="middle">254C</text>
<text class="lb" x="675.6" y="525.55" font-size="5.05" text-anchor="middle" textLength="44.41" lengthAdjust="spacingAndGlyphs">WOMEN'S RR  254</text>
<line class="u" x1="653.39" y1="526.7" x2="697.81" y2="526.7"/>
<path class="w" d="M655.5 544 L655.5 532.5 L697 532.5 L697 544"/>
<path class="wh" d="M655.5 544 L655.5 532.5 L697 532.5 L697 544"/>
<rect class="w" x="664.5" y="535" width="8" height="5.5" style="fill:none"/>
<rect class="wh" x="664.5" y="535" width="8" height="5.5"/>
<rect class="w" x="682.5" y="535" width="8" height="5.5" style="fill:none"/>
<rect class="wh" x="682.5" y="535" width="8" height="5.5"/>
<path class="rc" d="M722 407.5 A2.15 2.15 0 0 1 726.29 407.5 A2.15 2.15 0 0 1 730.58 407.5 A2.15 2.15 0 0 1 734.86 407.5 A2.15 2.15 0 0 1 739.15 407.5 A2.15 2.15 0 0 1 743.44 407.5 A2.15 2.15 0 0 1 747.72 407.5 A2.15 2.15 0 0 1 752.01 407.5 A2.15 2.15 0 0 1 756.3 407.5 A2.27 2.27 0 0 1 756.31 412.03 A2.27 2.27 0 0 1 756.32 416.55 A2.27 2.27 0 0 1 756.33 421.08 A2.27 2.27 0 0 1 756.34 425.61 A2.27 2.27 0 0 1 756.35 430.13 A2.27 2.27 0 0 1 756.36 434.66 A2.27 2.27 0 0 1 756.37 439.18 A2.27 2.27 0 0 1 756.38 443.71 A2.27 2.27 0 0 1 756.39 448.24 A2.27 2.27 0 0 1 756.41 452.76 A2.27 2.27 0 0 1 756.42 457.29 A2.27 2.27 0 0 1 756.43 461.82 A2.27 2.27 0 0 1 756.44 466.34 A2.27 2.27 0 0 1 756.45 470.87 A2.27 2.27 0 0 1 756.46 475.39 A2.27 2.27 0 0 1 756.47 479.92 A2.27 2.27 0 0 1 756.48 484.45 A2.27 2.27 0 0 1 756.49 488.97 A2.27 2.27 0 0 1 756.5 493.5 A2.16 2.16 0 0 1 752.19 493.5 A2.16 2.16 0 0 1 747.88 493.5 A2.16 2.16 0 0 1 743.56 493.5 A2.16 2.16 0 0 1 739.25 493.5 A2.16 2.16 0 0 1 734.94 493.5 A2.16 2.16 0 0 1 730.62 493.5 A2.16 2.16 0 0 1 726.31 493.5 A2.16 2.16 0 0 1 722 493.5 A2.27 2.27 0 0 1 722 488.97 A2.27 2.27 0 0 1 722 484.45 A2.27 2.27 0 0 1 722 479.92 A2.27 2.27 0 0 1 722 475.39 A2.27 2.27 0 0 1 722 470.87 A2.27 2.27 0 0 1 722 466.34 A2.27 2.27 0 0 1 722 461.82 A2.27 2.27 0 0 1 722 457.29 A2.27 2.27 0 0 1 722 452.76 A2.27 2.27 0 0 1 722 448.24 A2.27 2.27 0 0 1 722 443.71 A2.27 2.27 0 0 1 722 439.18 A2.27 2.27 0 0 1 722 434.66 A2.27 2.27 0 0 1 722 430.13 A2.27 2.27 0 0 1 722 425.61 A2.27 2.27 0 0 1 722 421.08 A2.27 2.27 0 0 1 722 416.55 A2.27 2.27 0 0 1 722 412.03 A2.27 2.27 0 0 1 722 407.5"/>
<rect class="t2" x="726.5" y="419" width="26.5" height="35.5" style="fill:none"/>
<line class="t" x1="726.5" y1="419" x2="753" y2="454.5"/>
<line class="t" x1="753" y1="419" x2="726.5" y2="454.5"/>
<rect class="t2" x="726.5" y="457" width="26.5" height="36" style="fill:none"/>
<line class="t" x1="726.5" y1="457" x2="753" y2="493"/>
<line class="t" x1="753" y1="457" x2="726.5" y2="493"/>
<line class="w" x1="720.8" y1="405.7" x2="720.8" y2="544.3"/>
<line class="wh" x1="720.8" y1="405.7" x2="720.8" y2="544.3"/>
<rect class="w" x="722.6" y="496.8" width="34.4" height="36" style="fill:none"/>
<rect class="wh" x="722.6" y="496.8" width="34.4" height="36"/>
<rect class="t2" x="729.5" y="511" width="21" height="18.5" style="fill:none"/>
<line class="t" x1="729.5" y1="511" x2="750.5" y2="529.5"/>
<line class="t" x1="750.5" y1="511" x2="729.5" y2="529.5"/>
<rect class="t2" x="739.5" y="499.5" width="11" height="9.5" style="fill:none"/>
<line class="t" x1="739.5" y1="509" x2="750.5" y2="499.5"/>
<line class="rd" x1="757.5" y1="454.2" x2="765" y2="454.2"/>
<text class="rb2" x="783.2" y="452.6" font-size="4.4" text-anchor="middle">Split into three</text>
<text class="lb" x="779.9" y="471.05" font-size="5.05" text-anchor="middle" textLength="28.82" lengthAdjust="spacingAndGlyphs">LOBBY  256</text>
<line class="u" x1="765.49" y1="472.2" x2="794.31" y2="472.2"/>
<path class="t" d="M716.2 546.5 L716.2 553 L722.5 553 L732 566 L737.5 566"/>
<circle class="t2" cx="745.8" cy="565.4" r="8.5" style="fill:#fff"/>
<line class="t" x1="737.3" y1="565.4" x2="754.3" y2="565.4"/>
<text class="gr" x="745.8" y="563.6" font-size="3" text-anchor="middle">1</text>
<text class="gr" x="745.8" y="570" font-size="3.2" text-anchor="middle">A6.02</text>
<path class="w" d="M980 398 Q980 390.6 972.8 390.6 L960.3 391.2 Q954 391.5 954 397.5 L954 403.8 L913.6 403.8 L913.6 400.5 Q913.6 396 908.8 396.3 L815.8 402.6 Q804.8 403.8 804.8 413 L804.8 534 Q804.8 543 814.8 544 L908.8 552.6 Q913.6 553 913.6 549 L913.6 545.4 L954 545.4 L954 552 Q954 558 960.3 558.4 L972.8 559.4 Q980 559.6 980 552 Z"/>
<path class="wh" d="M980 398 Q980 390.6 972.8 390.6 L960.3 391.2 Q954 391.5 954 397.5 L954 403.8 L913.6 403.8 L913.6 400.5 Q913.6 396 908.8 396.3 L815.8 402.6 Q804.8 403.8 804.8 413 L804.8 534 Q804.8 543 814.8 544 L908.8 552.6 Q913.6 553 913.6 549 L913.6 545.4 L954 545.4 L954 552 Q954 558 960.3 558.4 L972.8 559.4 Q980 559.6 980 552 Z"/>
<path class="da" d="M960.3 391.2 L908.8 396.3"/>
<path class="da" d="M977.3 557 Q976.8 562.5 970.8 562.4 L911.8 556.8 L811.8 547.6"/>
<rect class="w" x="806" y="405.7" width="164" height="138.6" style="fill:none"/>
<rect class="wh" x="806" y="405.7" width="164" height="138.6"/>
<line class="w" x1="841.5" y1="405.7" x2="841.5" y2="544.3"/>
<line class="wh" x1="841.5" y1="405.7" x2="841.5" y2="544.3"/>
<rect class="rd2" x="808.6" y="419.8" width="26.2" height="33.9" style="fill:none"/>
<line class="t" x1="808.6" y1="419.8" x2="834.8" y2="453.7"/>
<line class="t" x1="834.8" y1="419.8" x2="808.6" y2="453.7"/>
<rect class="t2" x="808.6" y="457" width="26.2" height="36" style="fill:none"/>
<line class="t" x1="808.6" y1="457" x2="834.8" y2="493"/>
<line class="t" x1="834.8" y1="457" x2="808.6" y2="493"/>
<line class="w" x1="806" y1="496.5" x2="841.5" y2="496.5"/>
<line class="wh" x1="806" y1="496.5" x2="841.5" y2="496.5"/>
<rect class="t2" x="810.5" y="511" width="22" height="19" style="fill:none"/>
<line class="t" x1="810.5" y1="530" x2="832.5" y2="511"/>
<line class="w" x1="806" y1="532.5" x2="841.5" y2="532.5"/>
<line class="wh" x1="806" y1="532.5" x2="841.5" y2="532.5"/>
<line class="w" x1="841.5" y1="486.3" x2="934" y2="486.3"/>
<line class="wh" x1="841.5" y1="486.3" x2="934" y2="486.3"/>
<line class="w2" x1="933" y1="405.7" x2="933" y2="544.3"/>
<line class="wh2" x1="933" y1="405.7" x2="933" y2="544.3"/>
<line class="w" x1="936.5" y1="405.7" x2="936.5" y2="544.3"/>
<line class="wh" x1="936.5" y1="405.7" x2="936.5" y2="544.3"/>
<text class="lb" x="886.7" y="413.75" font-size="5.05" text-anchor="middle" textLength="31.91" lengthAdjust="spacingAndGlyphs">SERVER  257</text>
<line class="u" x1="870.75" y1="414.9" x2="902.65" y2="414.9"/>
<path class="rc" d="M847.6 420.5 A2.68 2.68 0 0 1 852.94 420.5 A2.68 2.68 0 0 1 858.29 420.5 A2.68 2.68 0 0 1 863.63 420.5 A2.68 2.68 0 0 1 868.97 420.5 A2.68 2.68 0 0 1 874.31 420.5 A2.68 2.68 0 0 1 879.66 420.5 A2.68 2.68 0 0 1 885 420.5 A2.68 2.68 0 0 1 890.34 420.5 A2.68 2.68 0 0 1 895.69 420.5 A2.68 2.68 0 0 1 901.03 420.5 A2.68 2.68 0 0 1 906.37 420.5 A2.68 2.68 0 0 1 911.71 420.5 A2.68 2.68 0 0 1 917.06 420.5 A2.68 2.68 0 0 1 922.4 420.5 A2.57 2.57 0 0 1 922.4 425.63 A2.57 2.57 0 0 1 922.4 430.76 A2.57 2.57 0 0 1 922.4 435.89 A2.57 2.57 0 0 1 922.4 441.02 A2.57 2.57 0 0 1 922.4 446.15 A2.57 2.57 0 0 1 922.4 451.28 A2.57 2.57 0 0 1 922.4 456.41 A2.57 2.57 0 0 1 922.4 461.54 A2.57 2.57 0 0 1 922.4 466.67 A2.57 2.57 0 0 1 922.4 471.8 A2.68 2.68 0 0 1 917.06 471.8 A2.68 2.68 0 0 1 911.71 471.8 A2.68 2.68 0 0 1 906.37 471.8 A2.68 2.68 0 0 1 901.03 471.8 A2.68 2.68 0 0 1 895.69 471.8 A2.68 2.68 0 0 1 890.34 471.8 A2.68 2.68 0 0 1 885 471.8 A2.68 2.68 0 0 1 879.66 471.8 A2.68 2.68 0 0 1 874.31 471.8 A2.68 2.68 0 0 1 868.97 471.8 A2.68 2.68 0 0 1 863.63 471.8 A2.68 2.68 0 0 1 858.29 471.8 A2.68 2.68 0 0 1 852.94 471.8 A2.68 2.68 0 0 1 847.6 471.8 A2.57 2.57 0 0 1 847.6 466.67 A2.57 2.57 0 0 1 847.6 461.54 A2.57 2.57 0 0 1 847.6 456.41 A2.57 2.57 0 0 1 847.6 451.28 A2.57 2.57 0 0 1 847.6 446.15 A2.57 2.57 0 0 1 847.6 441.02 A2.57 2.57 0 0 1 847.6 435.89 A2.57 2.57 0 0 1 847.6 430.76 A2.57 2.57 0 0 1 847.6 425.63 A2.57 2.57 0 0 1 847.6 420.5"/>
<rect class="dk" x="850" y="421.5" width="19.5" height="49" style="fill:none"/>
<line class="dk" x1="856" y1="421.5" x2="856" y2="470.5"/>
<line class="dk" x1="863" y1="421.5" x2="863" y2="470.5"/>
<line class="dk" x1="850" y1="438" x2="869.5" y2="438"/>
<line class="dk" x1="850" y1="454.5" x2="869.5" y2="454.5"/>
<rect class="dk" x="875.5" y="421.5" width="19.5" height="49" style="fill:none"/>
<line class="dk" x1="881.5" y1="421.5" x2="881.5" y2="470.5"/>
<line class="dk" x1="888.5" y1="421.5" x2="888.5" y2="470.5"/>
<line class="dk" x1="875.5" y1="438" x2="895" y2="438"/>
<line class="dk" x1="875.5" y1="454.5" x2="895" y2="454.5"/>
<rect class="dk" x="900.5" y="421.5" width="19.5" height="49" style="fill:none"/>
<line class="dk" x1="906.5" y1="421.5" x2="906.5" y2="470.5"/>
<line class="dk" x1="913.5" y1="421.5" x2="913.5" y2="470.5"/>
<line class="dk" x1="900.5" y1="438" x2="920" y2="438"/>
<line class="dk" x1="900.5" y1="454.5" x2="920" y2="454.5"/>
<text class="mg" x="903" y="447.5" font-size="2.4" text-anchor="middle">Flange Elevation</text>
<line class="mgl" x1="916" y1="446.5" x2="924" y2="446.5"/>
<text class="lb" x="905.5" y="481.75" font-size="5.05" text-anchor="middle" textLength="39.76" lengthAdjust="spacingAndGlyphs">STORAGE  258A</text>
<line class="u" x1="885.62" y1="482.9" x2="925.38" y2="482.9"/>
<line class="t" x1="906" y1="484" x2="917" y2="501"/>
<circle class="k" cx="917.4" cy="501.6" r="0.8"/>
<path class="dr" d="M920 405.7 A10 10 0 0 0 931 416"/>
<circle class="tg" cx="924.6" cy="405.6" r="4.2"/>
<text class="tn" x="924.6" y="406.7" font-size="3.2" text-anchor="middle">257</text>
<path class="dr" d="M948.5 405.7 A10 10 0 0 1 938 416"/>
<circle class="tg" cx="942.6" cy="405.6" r="4.2"/>
<text class="tn" x="942.6" y="406.7" font-size="3.2" text-anchor="middle">260</text>
<line class="w" x1="936.5" y1="462.7" x2="970" y2="462.7"/>
<line class="wh" x1="936.5" y1="462.7" x2="970" y2="462.7"/>
<line class="w" x1="967.7" y1="405.7" x2="967.7" y2="544.3"/>
<line class="wh" x1="967.7" y1="405.7" x2="967.7" y2="544.3"/>
<g transform="rotate(-90 951.7 436.5)">
<text class="lb" x="951.7" y="438.25" font-size="5.05" text-anchor="middle" textLength="36.11" lengthAdjust="spacingAndGlyphs">STORAGE  260</text>
<line class="u" x1="933.64" y1="439.4" x2="969.76" y2="439.4"/>
</g>
<line class="d2" x1="938" y1="466" x2="966" y2="466"/>
<line class="d2" x1="938" y1="470" x2="966" y2="470"/>
<line class="d2" x1="938" y1="474" x2="966" y2="474"/>
<line class="d2" x1="938" y1="478" x2="966" y2="478"/>
<line class="d2" x1="938" y1="482" x2="966" y2="482"/>
<line class="d2" x1="938" y1="486" x2="966" y2="486"/>
<line class="d2" x1="938" y1="490" x2="966" y2="490"/>
<line class="d2" x1="938" y1="494" x2="966" y2="494"/>
<line class="d2" x1="938" y1="498" x2="966" y2="498"/>
<line class="d2" x1="938" y1="502" x2="966" y2="502"/>
<line class="d2" x1="938" y1="506" x2="966" y2="506"/>
<line class="w" x1="950" y1="476" x2="950" y2="509"/>
<line class="wh" x1="950" y1="476" x2="950" y2="509"/>
<line class="t" x1="956" y1="476" x2="956" y2="509"/>
<line class="t" x1="962" y1="476" x2="962" y2="509"/>
<line class="t" x1="950" y1="478" x2="966" y2="478"/>
<line class="t" x1="950" y1="482" x2="966" y2="482"/>
<line class="t" x1="950" y1="486" x2="966" y2="486"/>
<line class="t" x1="950" y1="490" x2="966" y2="490"/>
<line class="t" x1="950" y1="494" x2="966" y2="494"/>
<line class="t" x1="950" y1="498" x2="966" y2="498"/>
<line class="t" x1="950" y1="502" x2="966" y2="502"/>
<line class="t" x1="950" y1="506" x2="966" y2="506"/>
<line class="t2" x1="936.5" y1="509.3" x2="967.7" y2="509.3"/>
<text class="gr" x="960.5" y="513.2" font-size="2.8" text-anchor="middle">UP</text>
<text class="lb" x="951" y="526.75" font-size="5.05" text-anchor="middle" textLength="26.01" lengthAdjust="spacingAndGlyphs">STAIR  259</text>
<line class="u" x1="938" y1="527.9" x2="964" y2="527.9"/>
<text class="lb" x="889.3" y="526.75" font-size="5.05" text-anchor="middle" textLength="35.72" lengthAdjust="spacingAndGlyphs">MEN'S RR  258</text>
<line class="u" x1="871.44" y1="527.9" x2="907.16" y2="527.9"/>
<path class="dr" d="M920 544.3 A10 10 0 0 1 931 533 L931 544"/>
<circle class="tg" cx="924.6" cy="544.4" r="4.2"/>
<text class="tn" x="924.6" y="545.5" font-size="3.2" text-anchor="middle">258</text>
<path class="dr" d="M948.5 544.3 A10 10 0 0 0 938 533 L938 544"/>
<circle class="tg" cx="942.6" cy="544.4" r="4.2"/>
<text class="tn" x="942.6" y="545.5" font-size="3.2" text-anchor="middle">259</text>
<circle class="k" cx="847.5" cy="494.2" r="2.3"/>
<circle class="k" cx="870.5" cy="494.2" r="2.3"/>
<line class="w" x1="863.5" y1="487" x2="863.5" y2="516"/>
<line class="wh" x1="863.5" y1="487" x2="863.5" y2="516"/>
<path class="w" d="M863.5 516 L857 530 L842 530"/>
<path class="wh" d="M863.5 516 L857 530 L842 530"/>
<path class="dr" d="M852 530 A8 8 0 0 1 864 527"/>
<circle class="tg" cx="859.6" cy="524" r="4.2"/>
<text class="tn" x="859.6" y="525.1" font-size="3.2" text-anchor="middle">258B</text>
<path class="w" d="M906.5 487 L906.5 513 L921 513"/>
<path class="wh" d="M906.5 487 L906.5 513 L921 513"/>
<path class="dr" d="M921 513 A10 10 0 0 1 921 532"/>
<circle class="tg" cx="925" cy="517.3" r="4.2"/>
<text class="tn" x="925" y="518.4" font-size="3.2" text-anchor="middle">258A</text>
<rect class="t" x="923" y="488.5" width="8.5" height="8.5" style="fill:none"/>
<path class="w" d="M876 489 L876 507 L873 507"/>
<path class="wh" d="M876 489 L876 507 L873 507"/>
<rect class="da" x="878.5" y="490" width="23.5" height="17"/>
<path class="w" d="M864.5 544 L864.5 533.5 L905 533.5 L905 544"/>
<path class="wh" d="M864.5 544 L864.5 533.5 L905 533.5 L905 544"/>
<rect class="w" x="869.5" y="535" width="8.5" height="5.5" style="fill:none"/>
<rect class="wh" x="869.5" y="535" width="8.5" height="5.5"/>
<rect class="w" x="889" y="535" width="8.5" height="5.5" style="fill:none"/>
<rect class="wh" x="889" y="535" width="8.5" height="5.5"/>
<line class="t2" x1="970" y1="425" x2="980.5" y2="425"/>
<line class="t2" x1="970" y1="524.5" x2="980.5" y2="524.5"/>
<path class="t3" d="M1017 416.6 L1247 416.6 Q1252.6 416.6 1252.6 422 L1252.6 528 Q1252.6 533.3 1247 533.3 L1017 533.3"/>
<path class="d" d="M981 404.3 L1256 404.3 Q1264.2 404.3 1264.2 412.5 L1264.2 537 Q1264.2 545.4 1256 545.4 L981 545.4"/>
<text class="lb" x="1146" y="470.35" font-size="5.05" text-anchor="middle" textLength="45.46" lengthAdjust="spacingAndGlyphs">OPEN OFFICE  263</text>
<line class="u" x1="1123.27" y1="471.5" x2="1168.73" y2="471.5"/>
<path class="w" d="M980.5 423.5 Q980.5 417 987 417 L1021.5 417 Q1028 417 1028 423.5 L1028 526 Q1028 532.5 1021.5 532.5 L987 532.5 Q980.5 532.5 980.5 526"/>
<path class="wh" d="M980.5 423.5 Q980.5 417 987 417 L1021.5 417 Q1028 417 1028 423.5 L1028 526 Q1028 532.5 1021.5 532.5 L987 532.5 Q980.5 532.5 980.5 526"/>
<line class="d" x1="985.5" y1="418" x2="985.5" y2="532"/>
<line class="w" x1="969" y1="475" x2="1028" y2="475"/>
<line class="wh" x1="969" y1="475" x2="1028" y2="475"/>
<path class="dr" d="M1028 459.9 A14 14 0 0 0 1014 473.9 M1014 476.1 A14 14 0 0 0 1028 490.1"/>
<line class="ws" x1="1029" y1="475" x2="1014.6" y2="475"/>
<line class="wsi" x1="1028" y1="475" x2="1015.5" y2="475"/>
<circle class="tg" cx="1028.5" cy="466.3" r="4.4"/>
<circle class="tg" cx="1028.5" cy="483.7" r="4.4"/>
<text class="tn" x="1028.5" y="467.4" font-size="3.2" text-anchor="middle">261</text>
<text class="tn" x="1028.5" y="484.8" font-size="3.2" text-anchor="middle">262</text>
<text class="lb" x="1002.5" y="445.45" font-size="5.05" text-anchor="middle" textLength="29.75" lengthAdjust="spacingAndGlyphs">OFFICE  261</text>
<line class="u" x1="987.63" y1="446.6" x2="1017.37" y2="446.6"/>
<text class="lb" x="1000.5" y="504.25" font-size="5.05" text-anchor="middle" textLength="25.45" lengthAdjust="spacingAndGlyphs">COPY  262</text>
<line class="u" x1="987.77" y1="505.4" x2="1013.23" y2="505.4"/>
<line class="t2" x1="971" y1="425" x2="980.5" y2="425"/>
<line class="t2" x1="971" y1="524.5" x2="980.5" y2="524.5"/>
<path class="rd2" d="M484 416.2 L576 416.2 Q583 416.2 583 423 L583 526.5 Q583 533.3 576 533.3 L484 533.3"/>
<path class="w" d="M581.5 424 Q581.5 417.6 575 417.6 L530 417.6 Q523.3 417.6 523.3 424.5 L523.3 524.5 Q523.3 531.4 530 531.4 L575 531.4 Q581.5 531.4 581.5 525"/>
<path class="wh" d="M581.5 424 Q581.5 417.6 575 417.6 L530 417.6 Q523.3 417.6 523.3 424.5 L523.3 524.5 Q523.3 531.4 530 531.4 L575 531.4 Q581.5 531.4 581.5 525"/>
<line class="w" x1="523.3" y1="475.1" x2="592" y2="475.1"/>
<line class="wh" x1="523.3" y1="475.1" x2="592" y2="475.1"/>
<path class="dr" d="M523.3 459.7 A14.3 14.3 0 0 1 537.6 474 M537.6 476.2 A14.3 14.3 0 0 1 523.3 490.5"/>
<line class="ws" x1="522.3" y1="475.1" x2="537" y2="475.1"/>
<line class="wsi" x1="523.3" y1="475.1" x2="536.1" y2="475.1"/>
<circle class="tg" cx="522.8" cy="466.4" r="4.4"/>
<circle class="tg" cx="522.8" cy="483.8" r="4.4"/>
<text class="tn" x="522.8" y="467.5" font-size="3.2" text-anchor="middle">249</text>
<text class="tn" x="522.8" y="484.9" font-size="3.2" text-anchor="middle">250</text>
<text class="lb" x="560.5" y="446.15" font-size="5.05" text-anchor="middle" textLength="29.75" lengthAdjust="spacingAndGlyphs">OFFICE  249</text>
<line class="u" x1="545.63" y1="447.3" x2="575.37" y2="447.3"/>
<text class="lb" x="558.6" y="503.95" font-size="5.05" text-anchor="middle" textLength="25.45" lengthAdjust="spacingAndGlyphs">COPY  250</text>
<line class="u" x1="545.87" y1="505.1" x2="571.33" y2="505.1"/>
<line class="t2" x1="583" y1="425" x2="592" y2="425"/>
<line class="t2" x1="583" y1="524.5" x2="592" y2="524.5"/>
<text class="rb" x="510.5" y="479" font-size="8.2" text-anchor="end" textLength="22.3" lengthAdjust="spacingAndGlyphs">6 sq m</text>
<line class="d" x1="484" y1="404.3" x2="582" y2="404.3"/>
<line class="d" x1="484" y1="544.6" x2="582" y2="544.6"/>
<path class="d" d="M484 584 L716 602.5 L780 606 L845 602.5 L1218 571.8"/>
<path class="w" d="M484 584.4 L559 590 Q567.3 590.6 567.3 598 L567.3 678"/>
<path class="wh" d="M484 584.4 L559 590 Q567.3 590.6 567.3 598 L567.3 678"/>
<line class="w" x1="522" y1="587.3" x2="522" y2="678"/>
<line class="wh" x1="522" y1="587.3" x2="522" y2="678"/>
<line class="w" x1="484" y1="633.3" x2="567.3" y2="633.3"/>
<line class="wh" x1="484" y1="633.3" x2="567.3" y2="633.3"/>
<path class="dr" d="M567.3 617.7 A14.5 14.5 0 0 0 552.8 632.2 M552.8 634.4 A14.5 14.5 0 0 0 567.3 648.9"/>
<line class="ws" x1="568.3" y1="633.3" x2="553.4" y2="633.3"/>
<line class="wsi" x1="567.3" y1="633.3" x2="554.3" y2="633.3"/>
<circle class="tg" cx="567.8" cy="624.6" r="4.4"/>
<circle class="tg" cx="567.8" cy="642" r="4.4"/>
<text class="tn" x="567.8" y="625.7" font-size="3.2" text-anchor="middle">238</text>
<text class="tn" x="567.8" y="643.1" font-size="3.2" text-anchor="middle">239</text>
<text class="lb" x="501" y="609.25" font-size="5.05" text-anchor="middle" textLength="29.75" lengthAdjust="spacingAndGlyphs">OFFICE  240</text>
<line class="u" x1="486.13" y1="610.4" x2="515.87" y2="610.4"/>
<text class="lb" x="545" y="609.25" font-size="5.05" text-anchor="middle" textLength="29.75" lengthAdjust="spacingAndGlyphs">OFFICE  238</text>
<line class="u" x1="530.13" y1="610.4" x2="559.87" y2="610.4"/>
<text class="lb" x="501" y="656.25" font-size="5.05" text-anchor="middle" textLength="29.75" lengthAdjust="spacingAndGlyphs">OFFICE  241</text>
<line class="u" x1="486.13" y1="657.4" x2="515.87" y2="657.4"/>
<text class="lb" x="543.8" y="656.25" font-size="5.05" text-anchor="middle" textLength="29.75" lengthAdjust="spacingAndGlyphs">OFFICE  239</text>
<line class="u" x1="528.93" y1="657.4" x2="558.67" y2="657.4"/>
<path class="w" d="M608 678 L608 599.5 Q608 593.5 614 593.98 L689 600.02 Q695 600.5 695 606.5 L695 678"/>
<path class="wh" d="M608 678 L608 599.5 Q608 593.5 614 593.98 L689 600.02 Q695 600.5 695 606.5 L695 678"/>
<line class="w" x1="651.5" y1="597" x2="651.5" y2="678"/>
<line class="wh" x1="651.5" y1="597" x2="651.5" y2="678"/>
<line class="w" x1="608" y1="633.3" x2="695" y2="633.3"/>
<line class="wh" x1="608" y1="633.3" x2="695" y2="633.3"/>
<path class="dr" d="M608 617.7 A14.5 14.5 0 0 1 622.5 632.2 M622.5 634.4 A14.5 14.5 0 0 1 608 648.9"/>
<line class="ws" x1="607" y1="633.3" x2="621.9" y2="633.3"/>
<line class="wsi" x1="608" y1="633.3" x2="621" y2="633.3"/>
<circle class="tg" cx="607.5" cy="624.6" r="4.4"/>
<circle class="tg" cx="607.5" cy="642" r="4.4"/>
<text class="tn" x="607.5" y="625.7" font-size="3.2" text-anchor="middle">236</text>
<text class="tn" x="607.5" y="643.1" font-size="3.2" text-anchor="middle">237</text>
<path class="dr" d="M695 617.7 A14.5 14.5 0 0 0 680.5 632.2 M680.5 634.4 A14.5 14.5 0 0 0 695 648.9"/>
<line class="ws" x1="696" y1="633.3" x2="681.1" y2="633.3"/>
<line class="wsi" x1="695" y1="633.3" x2="682" y2="633.3"/>
<circle class="tg" cx="695.5" cy="624.6" r="4.4"/>
<circle class="tg" cx="695.5" cy="642" r="4.4"/>
<text class="tn" x="695.5" y="625.7" font-size="3.2" text-anchor="middle">234</text>
<text class="tn" x="695.5" y="643.1" font-size="3.2" text-anchor="middle">235</text>
<rect class="n" x="613.93" y="611.5" width="30.75" height="5.7" style="fill:#ffff00"/>
<text class="lb" x="629.3" y="616.25" font-size="5.05" text-anchor="middle" textLength="29.75" lengthAdjust="spacingAndGlyphs">OFFICE  236</text>
<line class="u" x1="614.43" y1="617.4" x2="644.17" y2="617.4"/>
<text class="lb" x="672" y="616.25" font-size="5.05" text-anchor="middle" textLength="34.24" lengthAdjust="spacingAndGlyphs">MEETING  234</text>
<line class="u" x1="654.88" y1="617.4" x2="689.12" y2="617.4"/>
<rect class="n" x="613.93" y="655" width="30.75" height="5.7" style="fill:#ffff00"/>
<text class="lb" x="629.3" y="659.75" font-size="5.05" text-anchor="middle" textLength="29.75" lengthAdjust="spacingAndGlyphs">OFFICE  237</text>
<line class="u" x1="614.43" y1="660.9" x2="644.17" y2="660.9"/>
<rect class="n" x="654.38" y="655" width="35.24" height="5.7" style="fill:#ffff00"/>
<text class="lb" x="672" y="659.75" font-size="5.05" text-anchor="middle" textLength="34.24" lengthAdjust="spacingAndGlyphs">MEETING  235</text>
<line class="u" x1="654.88" y1="660.9" x2="689.12" y2="660.9"/>
<rect class="da" x="692" y="592" width="178.5" height="96.8" rx="5"/>
<path class="w" d="M716 602.5 L780 606 L845 602.5"/>
<path class="wh" d="M716 602.5 L780 606 L845 602.5"/>
<path class="t2" d="M716 605.3 L780 608.8 L845 605.3"/>
<line class="w" x1="716" y1="602.5" x2="716" y2="620.5"/>
<line class="wh" x1="716" y1="602.5" x2="716" y2="620.5"/>
<line class="w" x1="845.5" y1="602.5" x2="845.5" y2="620.5"/>
<line class="wh" x1="845.5" y1="602.5" x2="845.5" y2="620.5"/>
<line class="t2" x1="716" y1="610.7" x2="845.5" y2="610.7"/>
<line class="t2" x1="716" y1="620.5" x2="845.5" y2="620.5"/>
<rect class="w" x="719.5" y="611.5" width="17.5" height="8.3" style="fill:none"/>
<rect class="wh" x="719.5" y="611.5" width="17.5" height="8.3"/>
<rect class="w" x="823.5" y="611.5" width="19" height="8.3" style="fill:none"/>
<rect class="wh" x="823.5" y="611.5" width="19" height="8.3"/>
<line class="w" x1="739" y1="610.7" x2="739" y2="620.5"/>
<line class="wh" x1="739" y1="610.7" x2="739" y2="620.5"/>
<line class="w" x1="821" y1="610.7" x2="821" y2="620.5"/>
<line class="wh" x1="821" y1="610.7" x2="821" y2="620.5"/>
<rect class="da" x="748" y="612" width="65" height="4.5"/>
<rect class="t2" x="775.5" y="613.5" width="10" height="5" rx="1" style="fill:#fff"/>
<line class="w" x1="780.5" y1="611" x2="780.5" y2="614.5"/>
<line class="wh" x1="780.5" y1="611" x2="780.5" y2="614.5"/>
<rect class="d" x="741" y="626" width="79.5" height="26.5"/>
<line class="t" x1="741" y1="632.5" x2="820.5" y2="632.5"/>
<line class="t" x1="741" y1="646.5" x2="820.5" y2="646.5"/>
<text class="lb" x="778" y="641.25" font-size="5.05" text-anchor="middle" textLength="29.19" lengthAdjust="spacingAndGlyphs">BREAK  233</text>
<line class="u" x1="763.41" y1="642.4" x2="792.59" y2="642.4"/>
<rect class="t2" x="710" y="662" width="141.8" height="12.5" style="fill:none"/>
<line class="t" x1="721" y1="664.2" x2="841" y2="664.2"/>
<rect class="w" x="710" y="662" width="11.8" height="12.5" style="fill:none"/>
<rect class="wh" x="710" y="662" width="11.8" height="12.5"/>
<rect class="w" x="840" y="662" width="11.8" height="12.5" style="fill:none"/>
<rect class="wh" x="840" y="662" width="11.8" height="12.5"/>
<line class="da" x1="692.5" y1="688.5" x2="870" y2="688.5"/>
<path class="t" d="M869.5 687 L878 698.5"/>
<circle class="t2" cx="883.2" cy="705.2" r="8.8" style="fill:#fff"/>
<line class="t" x1="874.4" y1="705.2" x2="892" y2="705.2"/>
<text class="gr" x="883.2" y="703.3" font-size="3" text-anchor="middle">G1</text>
<text class="gr" x="883.2" y="709.8" font-size="3.2" text-anchor="middle">A6.01</text>
<path class="w" d="M866 678 L866 606.6 Q866 600.6 872 600.14 L948 594.26 Q954 593.8 954 599.8 L954 678"/>
<path class="wh" d="M866 678 L866 606.6 Q866 600.6 872 600.14 L948 594.26 Q954 593.8 954 599.8 L954 678"/>
<line class="w" x1="909.5" y1="597.24" x2="909.5" y2="678"/>
<line class="wh" x1="909.5" y1="597.24" x2="909.5" y2="678"/>
<line class="w" x1="866" y1="633.3" x2="954" y2="633.3"/>
<line class="wh" x1="866" y1="633.3" x2="954" y2="633.3"/>
<path class="dr" d="M866 617.7 A14.5 14.5 0 0 1 880.5 632.2 M880.5 634.4 A14.5 14.5 0 0 1 866 648.9"/>
<line class="ws" x1="865" y1="633.3" x2="879.9" y2="633.3"/>
<line class="wsi" x1="866" y1="633.3" x2="879" y2="633.3"/>
<circle class="tg" cx="865.5" cy="624.6" r="4.4"/>
<circle class="tg" cx="865.5" cy="642" r="4.4"/>
<text class="tn" x="865.5" y="625.7" font-size="3.2" text-anchor="middle">231</text>
<text class="tn" x="865.5" y="643.1" font-size="3.2" text-anchor="middle">232</text>
<path class="dr" d="M954 617.7 A14.5 14.5 0 0 0 939.5 632.2 M939.5 634.4 A14.5 14.5 0 0 0 954 648.9"/>
<line class="ws" x1="955" y1="633.3" x2="940.1" y2="633.3"/>
<line class="wsi" x1="954" y1="633.3" x2="941" y2="633.3"/>
<circle class="tg" cx="954.5" cy="624.6" r="4.4"/>
<circle class="tg" cx="954.5" cy="642" r="4.4"/>
<text class="tn" x="954.5" y="625.7" font-size="3.2" text-anchor="middle">229</text>
<text class="tn" x="954.5" y="643.1" font-size="3.2" text-anchor="middle">230</text>
<text class="lb" x="890" y="616.25" font-size="5.05" text-anchor="middle" textLength="34.24" lengthAdjust="spacingAndGlyphs">MEETING  231</text>
<line class="u" x1="872.88" y1="617.4" x2="907.12" y2="617.4"/>
<text class="lb" x="928.8" y="616.25" font-size="5.05" text-anchor="middle" textLength="29.75" lengthAdjust="spacingAndGlyphs">OFFICE  229</text>
<line class="u" x1="913.93" y1="617.4" x2="943.67" y2="617.4"/>
<text class="lb" x="890" y="655.05" font-size="5.05" text-anchor="middle" textLength="34.24" lengthAdjust="spacingAndGlyphs">MEETING  232</text>
<line class="u" x1="872.88" y1="656.2" x2="907.12" y2="656.2"/>
<text class="lb" x="930.5" y="655.05" font-size="5.05" text-anchor="middle" textLength="29.75" lengthAdjust="spacingAndGlyphs">OFFICE  230</text>
<line class="u" x1="915.63" y1="656.2" x2="945.37" y2="656.2"/>
<path class="w" d="M995 678 L995 596 Q995 590 1001 589.54 L1076.5 583.76 Q1082.5 583.3 1082.5 589.3 L1082.5 678"/>
<path class="wh" d="M995 678 L995 596 Q995 590 1001 589.54 L1076.5 583.76 Q1082.5 583.3 1082.5 589.3 L1082.5 678"/>
<line class="w" x1="1038.8" y1="586.65" x2="1038.8" y2="678"/>
<line class="wh" x1="1038.8" y1="586.65" x2="1038.8" y2="678"/>
<line class="w" x1="995" y1="633.3" x2="1082.5" y2="633.3"/>
<line class="wh" x1="995" y1="633.3" x2="1082.5" y2="633.3"/>
<path class="dr" d="M995 617.7 A14.5 14.5 0 0 1 1009.5 632.2 M1009.5 634.4 A14.5 14.5 0 0 1 995 648.9"/>
<line class="ws" x1="994" y1="633.3" x2="1008.9" y2="633.3"/>
<line class="wsi" x1="995" y1="633.3" x2="1008" y2="633.3"/>
<circle class="tg" cx="994.5" cy="624.6" r="4.4"/>
<circle class="tg" cx="994.5" cy="642" r="4.4"/>
<text class="tn" x="994.5" y="625.7" font-size="3.2" text-anchor="middle">227</text>
<text class="tn" x="994.5" y="643.1" font-size="3.2" text-anchor="middle">228</text>
<path class="dr" d="M1082.5 617.7 A14.5 14.5 0 0 0 1068 632.2 M1068 634.4 A14.5 14.5 0 0 0 1082.5 648.9"/>
<line class="ws" x1="1083.5" y1="633.3" x2="1068.6" y2="633.3"/>
<line class="wsi" x1="1082.5" y1="633.3" x2="1069.5" y2="633.3"/>
<circle class="tg" cx="1083" cy="624.6" r="4.4"/>
<circle class="tg" cx="1083" cy="642" r="4.4"/>
<text class="tn" x="1083" y="625.7" font-size="3.2" text-anchor="middle">225</text>
<text class="tn" x="1083" y="643.1" font-size="3.2" text-anchor="middle">226</text>
<text class="lb" x="1017.5" y="601.75" font-size="5.05" text-anchor="middle" textLength="29.75" lengthAdjust="spacingAndGlyphs">OFFICE  227</text>
<line class="u" x1="1002.63" y1="602.9" x2="1032.37" y2="602.9"/>
<text class="lb" x="1060.5" y="601.75" font-size="5.05" text-anchor="middle" textLength="29.75" lengthAdjust="spacingAndGlyphs">OFFICE  225</text>
<line class="u" x1="1045.63" y1="602.9" x2="1075.37" y2="602.9"/>
<text class="lb" x="1017.5" y="657.25" font-size="5.05" text-anchor="middle" textLength="29.75" lengthAdjust="spacingAndGlyphs">OFFICE  228</text>
<line class="u" x1="1002.63" y1="658.4" x2="1032.37" y2="658.4"/>
<text class="lb" x="1058.8" y="657.25" font-size="5.05" text-anchor="middle" textLength="29.75" lengthAdjust="spacingAndGlyphs">OFFICE  226</text>
<line class="u" x1="1043.93" y1="658.4" x2="1073.67" y2="658.4"/>
<path class="w" d="M1124.3 678 L1124.3 586 Q1124.3 579.8 1130.5 579.3 L1204 573.5 Q1211.3 573 1211.3 580 L1211.3 678"/>
<path class="wh" d="M1124.3 678 L1124.3 586 Q1124.3 579.8 1130.5 579.3 L1204 573.5 Q1211.3 573 1211.3 580 L1211.3 678"/>
<line class="w" x1="1124.3" y1="624.5" x2="1211.3" y2="624.5"/>
<line class="wh" x1="1124.3" y1="624.5" x2="1211.3" y2="624.5"/>
<path class="dr" d="M1124.3 608.9 A14.5 14.5 0 0 1 1138.8 623.4 M1138.8 625.6 A14.5 14.5 0 0 1 1124.3 640.1"/>
<line class="ws" x1="1123.3" y1="624.5" x2="1138.2" y2="624.5"/>
<line class="wsi" x1="1124.3" y1="624.5" x2="1137.3" y2="624.5"/>
<circle class="tg" cx="1123.8" cy="615.8" r="4.4"/>
<circle class="tg" cx="1123.8" cy="633.2" r="4.4"/>
<text class="tn" x="1123.8" y="616.9" font-size="3.2" text-anchor="middle">223</text>
<text class="tn" x="1123.8" y="634.3" font-size="3.2" text-anchor="middle">224</text>
<text class="lb" x="1173" y="604.25" font-size="5.05" text-anchor="middle" textLength="29.75" lengthAdjust="spacingAndGlyphs">OFFICE  223</text>
<line class="u" x1="1158.13" y1="605.4" x2="1187.87" y2="605.4"/>
<text class="lb" x="1173" y="653.55" font-size="5.05" text-anchor="middle" textLength="29.75" lengthAdjust="spacingAndGlyphs">OFFICE  224</text>
<line class="u" x1="1158.13" y1="654.7" x2="1187.87" y2="654.7"/>
<line class="fr" x1="466.5" y1="897" x2="466.5" y2="936"/>
<line class="fr" x1="577.5" y1="897" x2="577.5" y2="936"/>
<line class="fr" x1="688.5" y1="897" x2="688.5" y2="936"/>
<line class="fr" x1="799.5" y1="897" x2="799.5" y2="936"/>
<line class="fr" x1="910.5" y1="897" x2="910.5" y2="936"/>
<line class="fr" x1="1021.5" y1="897" x2="1021.5" y2="936"/>
<line class="fr" x1="1132.5" y1="897" x2="1132.5" y2="936"/>
<line class="fr" x1="1243.5" y1="897" x2="1243.5" y2="936"/>
<line class="fr" x1="1353.5" y1="897" x2="1353.5" y2="936"/>
<rect class="lg" x="127" y="903" width="149.3" height="37" style="fill:none"/>
<rect class="lg2" x="129.5" y="905.5" width="144.3" height="34.5" style="fill:none"/>
<text class="br" font-size="20.5" text-anchor="middle" transform="translate(202.5 936.4) scale(0.6 1)" textLength="186" lengthAdjust="spacing">BRIGHTER</text>
<rect class="bb" x="282.9" y="921.9" width="6" height="18.1"/>
<path class="bb" d="M294.6 921.9 H317.8 V940 H311.8 V927.7 H294.6 Z"/>
<rect class="bb" x="294.6" y="933.6" width="11.8" height="6.4"/>
<text class="bbt" x="326.2" y="944.2" font-size="23" text-anchor="start" textLength="130" lengthAdjust="spacingAndGlyphs">BLUEBEAM</text>
<rect class="bb" x="457.3" y="928" width="1.3" height="1.3"/>
<text class="tbb" x="475.8" y="908.7" font-size="8.5" text-anchor="start" textLength="80" lengthAdjust="spacingAndGlyphs">Capture Engineers</text>
<text class="tbr" x="475.8" y="918.7" font-size="8.5" text-anchor="start" textLength="45.5" lengthAdjust="spacingAndGlyphs">Mechanical</text>
<text class="tbr" x="475.8" y="928.7" font-size="8.5" text-anchor="start" textLength="36.5" lengthAdjust="spacingAndGlyphs">Electrical</text>
<text class="tbr" x="475.8" y="938.7" font-size="8.5" text-anchor="start" textLength="36" lengthAdjust="spacingAndGlyphs">Plumbing</text>
<text class="tbb" x="590" y="908.5" font-size="8.5" text-anchor="start" textLength="85.3" lengthAdjust="spacingAndGlyphs">REVU ARCHITECTS</text>
<text class="tbr" x="590" y="928.7" font-size="8.5" text-anchor="start" textLength="69.3" lengthAdjust="spacingAndGlyphs">5555 N. Broad St</text>
<text class="tbr" x="590" y="938.7" font-size="8.5" text-anchor="start" textLength="82" lengthAdjust="spacingAndGlyphs">Pasadena CA 91101</text>
<text class="tbb" x="697" y="908.5" font-size="8.5" text-anchor="start" textLength="79.3" lengthAdjust="spacingAndGlyphs">OFFICE BUILDING</text>
<text class="tbr" x="697" y="928.7" font-size="8.5" text-anchor="start" textLength="77.3" lengthAdjust="spacingAndGlyphs">Project No: 323232</text>
<text class="tbb" x="805.5" y="908.6" font-size="3.9" text-anchor="start" textLength="45" lengthAdjust="spacingAndGlyphs">LEGAL DISCLAIMER:</text>
<text class="tbs" x="805.5" y="919.4" font-size="4.4" text-anchor="start" textLength="100" lengthAdjust="spacingAndGlyphs">ALL IDEAS, DESIGNS, AND PLANS INDICATED</text>
<text class="tbs" x="805.5" y="924.65" font-size="4.4" text-anchor="start" textLength="92" lengthAdjust="spacingAndGlyphs">OR REPRESENTED BY THESE DRAWINGS</text>
<text class="tbs" x="805.5" y="929.9" font-size="4.4" text-anchor="start" textLength="94" lengthAdjust="spacingAndGlyphs">ARE OWNED AND ARE THE PROPERTY OF</text>
<text class="tbs" x="805.5" y="935.15" font-size="4.4" text-anchor="start" textLength="96" lengthAdjust="spacingAndGlyphs">BLUEBEAM, INC. AND WERE CREATED AND</text>
<text class="tbs" x="922.7" y="904.3" font-size="4.2" text-anchor="start">DATE:</text>
<text class="tbs" x="1008.2" y="904.3" font-size="4.2" text-anchor="end">03/04/2018</text>
<text class="tbs" x="922.7" y="910.2" font-size="4.2" text-anchor="start">ISSUED FOR:</text>
<text class="tbs" x="1008.2" y="910.2" font-size="4.2" text-anchor="end">INTERNAL REVIEW</text>
<text class="tbs" x="922.7" y="921.8" font-size="4.2" text-anchor="start">PROJECT:</text>
<text class="tbs" x="1008.2" y="921.8" font-size="4.2" text-anchor="end">3232</text>
<text class="tbs" x="922.7" y="928" font-size="4.2" text-anchor="start">DRAWN BY:</text>
<text class="tbs" x="1008.2" y="928" font-size="4.2" text-anchor="end">Author</text>
<text class="tbs" x="922.7" y="933.6" font-size="4.2" text-anchor="start">CHECKED BY:</text>
<text class="tbs" x="1008.2" y="933.6" font-size="4.2" text-anchor="end">Checker</text>
<line class="tl" x1="922.5" y1="905.6" x2="1008.3" y2="905.6"/>
<line class="tl" x1="922.5" y1="907" x2="1008.3" y2="907"/>
<line class="tl" x1="922.5" y1="917.5" x2="1008.3" y2="917.5"/>
<line class="tl" x1="922.5" y1="923.2" x2="1008.3" y2="923.2"/>
<line class="tl" x1="922.5" y1="924.5" x2="1008.3" y2="924.5"/>
<line class="tl" x1="922.5" y1="929.3" x2="1008.3" y2="929.3"/>
<line class="tl" x1="922.5" y1="934.6" x2="1008.3" y2="934.6"/>
<text class="tbb" x="1050" y="935.2" font-size="12.3" text-anchor="start" textLength="53" lengthAdjust="spacingAndGlyphs">NOT FOR</text>
<text class="tbr" x="1138.3" y="908.7" font-size="8.8" text-anchor="start" textLength="33" lengthAdjust="spacingAndGlyphs">STAMP:</text>
<text class="tbr" x="1249.3" y="908.7" font-size="8.8" text-anchor="start" textLength="33" lengthAdjust="spacingAndGlyphs">STAMP:</text>
<text class="tbr" x="1408.8" y="904.6" font-size="5.3" text-anchor="middle" textLength="71.5" lengthAdjust="spacingAndGlyphs">SHEET TITLE &amp; NUMBER</text>
<line class="tl" x1="1370" y1="897.8" x2="1456" y2="897.8"/>
<text class="tbr" x="1408.8" y="918.7" font-size="9.6" text-anchor="middle" textLength="74.5" lengthAdjust="spacingAndGlyphs">LEVEL 02 FLOOR</text>
<text class="tbr" x="1408.8" y="928.7" font-size="9.6" text-anchor="middle" textLength="23.5" lengthAdjust="spacingAndGlyphs">PLAN</text></svg></div></div>
<div id="sb"><div id="sbt"></div></div><div id="rs"></div><div id="bt"></div><div id="st"></div>
<div style="left:243.5px;top:0;width:95px;height:19.6px;background:#0f4c81;border-bottom:2px solid #f5c431"></div>
<span class="t" style="left:20px;top:1.60px;font-size:15.5px;line-height:18.60px;color:#f2f2f2;letter-spacing:-0.972px;">Revu</span>
<span class="t" style="left:83.8px;top:1.60px;font-size:15.5px;line-height:18.60px;color:#f2f2f2;letter-spacing:-0.396px;">File</span>
<span class="t" style="left:139px;top:1.60px;font-size:15.5px;line-height:18.60px;color:#f2f2f2;letter-spacing:-0.68px;">Edit</span>
<span class="t" style="left:194px;top:1.60px;font-size:15.5px;line-height:18.60px;color:#f2f2f2;letter-spacing:-0.332px;">View</span>
<span class="t" style="left:256px;top:1.60px;font-size:15.5px;line-height:18.60px;color:#f2f2f2;letter-spacing:-0.457px;">Document</span>
<span class="t" style="left:353px;top:1.60px;font-size:15.5px;line-height:18.60px;color:#f2f2f2;letter-spacing:-0.528px;">Batch</span>
<span class="t" style="left:421px;top:1.60px;font-size:15.5px;line-height:18.60px;color:#f2f2f2;letter-spacing:-0.237px;">Tools</span>
<span class="t" style="left:486px;top:1.60px;font-size:15.5px;line-height:18.60px;color:#f2f2f2;letter-spacing:-0.523px;">Window</span>
<span class="t" style="left:569px;top:1.60px;font-size:15.5px;line-height:18.60px;color:#f2f2f2;letter-spacing:-0.473px;">Help</span>
<span class="t" style="left:1257px;top:2.84px;font-size:13.6px;line-height:16.32px;color:#fff;font-weight:700;letter-spacing:-0.513px;">taimoor@brightergraphics.com</span>
<span class="t" style="left:68px;top:34.28px;font-size:13.7px;line-height:16.44px;color:#fff;font-weight:700;letter-spacing:-0.569px;">Name:</span>
<span class="t" style="left:111px;top:34.28px;font-size:13.7px;line-height:16.44px;color:#e8e8e8;letter-spacing:-0.421px;">Brighter Graphics - Floor Plan 1</span>
<span class="t" style="left:49px;top:74.28px;font-size:13.7px;line-height:16.44px;color:#ececec;letter-spacing:-0.437px;">Brighter Graphics - Floor Plan 1</span>
<div style="left:646px;top:943px;width:270px;height:20px;border:1.5px solid #777;border-radius:3px;background:#2b2b2b"></div>
<span class="t" style="left:730px;top:947.22px;font-size:13.8px;line-height:16.56px;color:#f0f0f0;letter-spacing:-0.391px;">Floor Plan (1 of 1)</span>
<span class="t" style="left:1289.5px;top:946.44px;font-size:14.6px;line-height:17.52px;color:#f0f0f0;letter-spacing:-0.093px;">106.68 x 76.20 cm</span>
<span class="t" style="left:1430.5px;top:946.94px;font-size:14.6px;line-height:17.52px;color:#f0f0f0;letter-spacing:-0.138px;">9.525 cm = 30'-0"</span>
<span class="t" style="left:0.5px;top:986.32px;font-size:13.8px;line-height:16.56px;color:#e8e8e8;letter-spacing:-0.478px;">Ready</span>
<span class="t" style="left:1232px;top:986.54px;font-size:13.6px;line-height:16.32px;color:#f0f0f0;letter-spacing:-0.356px;">9.525 cm = 30'-0"</span>
<span class="t" style="left:1358px;top:986.54px;font-size:13.6px;line-height:16.32px;color:#f0f0f0;letter-spacing:-0.285px;">106.68 x 76.20 cm</span>
<span class="t" style="left:1500.8px;top:986.54px;font-size:13.6px;line-height:16.32px;color:#f0f0f0;letter-spacing:-0.204px;">(50.76, 28.61)</span>
<svg class="ic" style="left:8.0px;top:71.2px" width="22.1" height="22.1" viewBox="0 0 24 24" fill="none" stroke="#e2e2e2" stroke-width="1.85"><circle cx="9.5" cy="9.5" r="6.5"/><path d="M14.3 14.3 L22 22"/></svg>
<svg class="ic" style="left:8.0px;top:109.7px" width="22.1" height="22.1" viewBox="0 0 24 24" fill="none" stroke="#e2e2e2" stroke-width="1.74"><rect x="1" y="6" width="22" height="12"/><path d="M5.5 6 V12.5 M9.8 6 V10.5 M14.1 6 V12.5 M18.4 6 V10.5"/></svg>
<svg class="ic" style="left:8.0px;top:148.2px" width="22.1" height="22.1" viewBox="0 0 24 24" fill="none" stroke="#e2e2e2" stroke-width="1.85"><path d="M1.5 12 L8 5.5 H22 V18.5 H8 Z"/></svg>
<svg class="ic" style="left:8.0px;top:187.3px" width="22.1" height="22.1" viewBox="0 0 24 24" fill="none" stroke="#e2e2e2" stroke-width="1.63"><path d="M2 22 H22 M6 17.5 L7.8 10 L13.5 6.5 L19 12.5 L14.5 17 Z M13.5 6.5 L15.5 1.5 M19 12.5 L22.5 10.5 M6 17.5 L11 13"/><circle cx="12" cy="12" r="1.2"/></svg>
<svg class="ic" style="left:8.0px;top:225.2px" width="22.1" height="22.1" viewBox="0 0 24 24" fill="none" stroke="#e2e2e2" stroke-width="1.74"><rect x="1.8" y="1.8" width="8.2" height="8.2"/><rect x="14" y="1.8" width="8.2" height="8.2"/><rect x="1.8" y="14" width="8.2" height="8.2"/><rect x="14" y="14" width="8.2" height="8.2"/></svg>
<svg class="ic" style="left:8.0px;top:263.2px" width="22.1" height="22.1" viewBox="0 0 24 24" fill="none" stroke="#e2e2e2" stroke-width="1.74"><rect x="3.8" y="1.8" width="16.4" height="20.4" rx="1"/><path d="M3.8 11.5 H20.2 M9 5.5 V7 H15 V5.5 M9 15 V16.5 H15 V15"/></svg>
<svg class="ic" style="left:8.0px;top:302.1px" width="22.1" height="22.1" viewBox="0 0 24 24" fill="none" stroke="#e2e2e2" stroke-width="1.74"><rect x="3.8" y="1.8" width="16.4" height="20.4" rx="1"/><path d="M8 2 V12.5 L11 10 L14 12.5 V2"/></svg>
<svg class="ic" style="left:8.0px;top:340.8px" width="22.1" height="22.1" viewBox="0 0 24 24" fill="none" stroke="#e2e2e2" stroke-width="1.74"><path d="M9.5 2 H2 V22 H12.5 V17 M14 2 H22 V22 H17 M12.5 8 V12 H7 M12.5 12 H17 M17 17 V22"/></svg>
<svg class="ic" style="left:8.0px;top:379.3px" width="22.1" height="22.1" viewBox="0 0 24 24" fill="none" stroke="#e2e2e2" stroke-width="1.63"><path d="M19 12.5 V21.5 H2.5 V2.5 H16"/><path d="M6 7 H13 M6 11 H12 M6 15 H10 M6 18.2 H9"/><path d="M11 17.5 L12 13.5 L20.5 5 L23 7.5 L14.5 16 Z"/></svg>
<svg class="ic" style="left:8.0px;top:417.8px" width="22.1" height="22.1" viewBox="0 0 24 24" fill="none" stroke="#e2e2e2" stroke-width="1.74"><path d="M12 2.5 L22 8.5 L12 14.5 L2 8.5 Z M2 14 L12 20.5 L22 14"/></svg>
<svg class="ic" style="left:7px;top:455.3px" width="24" height="24" viewBox="0 0 24 27" fill="none" stroke="#e2e2e2" stroke-width="1.6"><g transform="translate(0 1.4) scale(1)"><path d="M12 1.8 l1.6 0 l0.7 2.6 l2.1 0.9 l2.4 -1.3 l2.2 2.2 l-1.3 2.4 l0.9 2.1 l2.6 0.7 l0 3.2 l-2.6 0.7 l-0.9 2.1 l1.3 2.4 l-2.2 2.2 l-2.4 -1.3 l-2.1 0.9 l-0.7 2.6 l-3.2 0 l-0.7 -2.6 l-2.1 -0.9 l-2.4 1.3 l-2.2 -2.2 l1.3 -2.4 l-0.9 -2.1 l-2.6 -0.7 l0 -3.2 l2.6 -0.7 l0.9 -2.1 l-1.3 -2.4 l2.2 -2.2 l2.4 1.3 l2.1 -0.9 l0.7 -2.6 z" transform="translate(0 0)"/><circle cx="12" cy="12.1" r="4.6"/></g></svg>
<svg class="ic" style="left:8.0px;top:494.8px" width="22.1" height="22.1" viewBox="0 0 24 24" fill="none" stroke="#e2e2e2" stroke-width="1.63"><path d="M5.5 3 H18.5 L21.5 14.5 H2.5 Z M7.5 5.5 H16.5 L18 11.5 H6 Z M2.5 17.5 H21.5 M2.5 20.5 H21.5 M2.5 14.5 V21.5 M21.5 14.5 V21.5"/></svg>
<svg class="ic" style="left:8.0px;top:533.3px" width="22.1" height="22.1" viewBox="0 0 24 24" fill="none" stroke="#e2e2e2" stroke-width="1.74"><rect x="1.8" y="7" width="20.4" height="14" rx="1.5"/><path d="M8 7 V4 Q8 3 9 3 H15 Q16 3 16 4 V7 M1.8 13.5 H10 M14 13.5 H22.2 M10 12 H14 V15.5 H10 Z"/></svg>
<div class="bl" style="left:0px;top:563.5px;width:38.6px;height:38.5px"></div>
<svg class="ic" style="left:8.0px;top:571.8px" width="22.1" height="22.1" viewBox="0 0 24 24" fill="none" stroke="#e2e2e2" stroke-width="1.74"><path d="M2.5 7.5 L15 3 L22 8 V18 L15.5 22 L7 19.5 H2.5 Z M7 19.5 V13 H12.5 V21"/></svg>
<div style="left:1558px;top:67px;width:37px;height:0;border-top:2px dotted #666"></div>
<div style="left:1558px;top:422px;width:32px;height:0;border-top:2px dotted #666"></div>
<svg class="ic" style="left:1565.0px;top:79.2px" width="24.0" height="24.0" viewBox="0 0 24 24" fill="none" stroke="#e2e2e2" stroke-width="1.50"><rect x="2.5" y="2.5" width="19" height="19"/><text x="12" y="16.6" font-size="12.5" font-weight="700" text-anchor="middle" fill="#e2e2e2" stroke="none" font-family="Liberation Sans,sans-serif">A</text></svg>
<svg class="ic" style="left:1565.0px;top:118.0px" width="24.0" height="24.0" viewBox="0 0 24 24" fill="none" stroke="#e2e2e2" stroke-width="1.40"><path d="M2 20.5 L6 13.5 L12 19 L9 20.5 Z" stroke="#e2e2e2" /><path d="M8 12 L13.5 5 L21 11.5 L14.5 17.5 Z M13.5 5 L15.5 2 M21 11.5 L23 9.5 M9.5 9.5 L17 16" stroke="#d8b03a"/></svg>
<svg class="ic" style="left:1565.0px;top:155.6px" width="24.0" height="24.0" viewBox="0 0 24 24" fill="none" stroke="#e2e2e2" stroke-width="1.60"><path d="M4 21 L7 14 L16 2.5 M7 14 L12 17.5 L22 9.5 M4 21 L12 17.5 M8.5 12 L13.5 16" stroke="#1a7fd8"/><path d="M2.5 22 L4.8 19.5" stroke="#e2e2e2" stroke-width="2.2"/></svg>
<svg class="ic" style="left:1565.0px;top:194.0px" width="24.0" height="24.0" viewBox="0 0 24 24" fill="none" stroke="#e2e2e2" stroke-width="1.50"><rect x="2.5" y="3" width="15" height="8"/><path d="M17.5 9 L22 13.5 L19.5 15.5"/><path d="M2 20.5 q2.5 -4 5 0 q2.5 -4 5 0 q2.5 -4 5 0 q2.5 -4 5 0"/></svg>
<svg class="ic" style="left:1565.0px;top:233.0px" width="24.0" height="24.0" viewBox="0 0 24 24" fill="none" stroke="#e2e2e2" stroke-width="1.50"><path d="M8.2 4.6 a3.9 3.9 0 0 1 7.6 0 a3.9 3.9 0 0 1 4.6 5.2 a3.9 3.9 0 0 1 0 6 a3.9 3.9 0 0 1 -4.6 4.4 a3.9 3.9 0 0 1 -7.6 0 a3.9 3.9 0 0 1 -4.6 -4.4 a3.9 3.9 0 0 1 0 -6 a3.9 3.9 0 0 1 4.6 -5.2 z"/></svg>
<svg class="ic" style="left:1565.0px;top:270.7px" width="24.0" height="24.0" viewBox="0 0 24 24" fill="none" stroke="#e2e2e2" stroke-width="1.50"><rect x="2.5" y="3" width="15" height="8"/><path d="M17.5 7 L22 12 L16 18"/><path d="M12.5 21.5 L14.5 15 L19 19.5 Z" fill="#e2e2e2" stroke="none"/></svg>
<svg class="ic" style="left:1561.5px;top:310.2px" width="24.0" height="24.0" viewBox="0 0 24 24" fill="none" stroke="#e2e2e2" stroke-width="1.50"><path d="M9.5 13.5 C9.5 10 8.5 8.5 8.5 6 A3.5 3.5 0 0 1 15.5 6 C15.5 8.5 14.5 10 14.5 13.5 M2.5 17.5 V13.5 H21.5 V17.5 M2 17.5 H22 M2.5 21 H21.5"/></svg>
<svg class="ic" style="left:1585.7px;top:316.5px" width="12.0" height="12.0" viewBox="0 0 12 12" fill="none" stroke="#e2e2e2" stroke-width="1.70"><path d="M1.5 3.5 L6 8 L10.5 3.5"/></svg>
<svg class="ic" style="left:1565.0px;top:348.3px" width="24.0" height="24.0" viewBox="0 0 24 24" fill="none" stroke="#e2e2e2" stroke-width="1.50"><rect x="2.5" y="3.5" width="19" height="17"/><path d="M2.5 18 L9 11.5 L13 15.5 L17 12 L21.5 16.5"/><circle cx="9" cy="8" r="1.6" fill="#e2e2e2" stroke="none"/></svg>
<svg class="ic" style="left:1565.0px;top:387.2px" width="24.0" height="24.0" viewBox="0 0 24 24" fill="none" stroke="#e2e2e2" stroke-width="1.50"><path d="M1 6 H11 M6 1 V11" stroke-width="1.7"/><path d="M13 6 H22 V22 H6 V13" stroke-dasharray="2.6 2"/></svg>
<svg class="ic" style="left:1561.0px;top:433.6px" width="24.0" height="24.0" viewBox="0 0 24 24" fill="none" stroke="#e2e2e2" stroke-width="1.70"><path d="M2.5 21.5 L21.5 2.5"/></svg>
<svg class="ic" style="left:1561.0px;top:472.7px" width="24.0" height="24.0" viewBox="0 0 24 24" fill="none" stroke="#e2e2e2" stroke-width="1.70"><path d="M2.5 21.5 L16 8"/><path d="M22 2 L19.5 11.5 L12.5 4.5 Z" fill="#e2e2e2" stroke="none"/></svg>
<svg class="ic" style="left:1561.0px;top:510.8px" width="24.0" height="24.0" viewBox="0 0 24 24" fill="none" stroke="#e2e2e2" stroke-width="1.70"><path d="M2.5 22 A19.5 19.5 0 0 1 22 2.5"/></svg>
<svg class="ic" style="left:1561.0px;top:549.0px" width="24.0" height="24.0" viewBox="0 0 24 24" fill="none" stroke="#e2e2e2" stroke-width="1.70"><path d="M2.5 22 L6 11.5 L10.5 16 L9.5 5.5 L18 9.5 L21.5 2.5"/></svg>
<svg class="ic" style="left:1561.0px;top:587.8px" width="24.0" height="24.0" viewBox="0 0 24 24" fill="none" stroke="#e2e2e2" stroke-width="1.60"><path d="M4 12 H20"/><path d="M2 12 L7 9.2 V14.8 Z M22 12 L17 9.2 V14.8 Z" fill="#e2e2e2" stroke="none"/><path d="M3.5 8.5 L5.5 15.5 M18.5 8.5 L20.5 15.5" stroke-width="1.2"/></svg>
<svg class="ic" style="left:1561.0px;top:626.3px" width="24.0" height="24.0" viewBox="0 0 24 24" fill="none" stroke="#e2e2e2" stroke-width="1.60"><rect x="2.5" y="5" width="19" height="14"/></svg>
<svg class="ic" style="left:1561.0px;top:665.0px" width="24.0" height="24.0" viewBox="0 0 24 24" fill="none" stroke="#e2e2e2" stroke-width="1.60"><ellipse cx="12" cy="12" rx="9.8" ry="7.2"/></svg>
<svg class="ic" style="left:1561.0px;top:703.7px" width="24.0" height="24.0" viewBox="0 0 24 24" fill="none" stroke="#e2e2e2" stroke-width="1.60"><path d="M3 3 H18 L13 11.5 L21 21 H3 Z"/></svg>
<svg class="ic" style="left:1562.0px;top:742.0px" width="24.0" height="24.0" viewBox="0 0 24 24" fill="none" stroke="#e2e2e2" stroke-width="1.50"><path d="M2.5 22 V2.5 H22.5" stroke="#7f5fc0" stroke-width="1.6"/><path d="M6.0 2.5 V0 M9.6 2.5 V0 M13.2 2.5 V0 M16.8 2.5 V0 M20.4 2.5 V0 M2.5 6.0 H0 M2.5 9.6 H0 M2.5 13.2 H0 M2.5 16.8 H0 M2.5 20.4 H0 " stroke="#7f5fc0" stroke-width="1.2"/><path d="M8 20.5 H21.5 V8 H15 L8 13"/><g fill="#e2e2e2" stroke="none"><rect x="6.5" y="19" width="3" height="3"/><rect x="20" y="19" width="3" height="3"/><rect x="20" y="6.5" width="3" height="3"/><rect x="13.5" y="6.5" width="3" height="3"/><rect x="6.5" y="11.5" width="3" height="3"/></g></svg>
<svg class="ic" style="left:1562.0px;top:781.2px" width="24.0" height="24.0" viewBox="0 0 24 24" fill="none" stroke="#e2e2e2" stroke-width="1.60"><path d="M2.5 22 V2.5 H22.5" stroke="#7f5fc0" stroke-width="1.6"/><path d="M6.0 2.5 V0 M9.6 2.5 V0 M13.2 2.5 V0 M16.8 2.5 V0 M20.4 2.5 V0 M2.5 6.0 H0 M2.5 9.6 H0 M2.5 13.2 H0 M2.5 16.8 H0 M2.5 20.4 H0 " stroke="#7f5fc0" stroke-width="1.2"/><path d="M8 21.5 H22 V7 H15.5 L8 14.5 Z"/></svg>
<svg class="ic" style="left:1562.0px;top:820.3px" width="24.0" height="24.0" viewBox="0 0 24 24" fill="none" stroke="#e2e2e2" stroke-width="1.50"><path d="M2.5 22 V2.5 H22.5" stroke="#7f5fc0" stroke-width="1.6"/><path d="M6.0 2.5 V0 M9.6 2.5 V0 M13.2 2.5 V0 M16.8 2.5 V0 M20.4 2.5 V0 M2.5 6.0 H0 M2.5 9.6 H0 M2.5 13.2 H0 M2.5 16.8 H0 M2.5 20.4 H0 " stroke="#7f5fc0" stroke-width="1.2"/><path d="M8 9.5 V19.5 M22 9.5 V19.5 M10 14.5 H20" stroke-width="1.4"/><path d="M8.8 14.5 L12.5 12 V17 Z M21.2 14.5 L17.5 12 V17 Z" fill="#e2e2e2" stroke="none"/></svg>
<svg class="ic" style="left:1562.0px;top:858.4px" width="24.0" height="24.0" viewBox="0 0 24 24" fill="none" stroke="#e2e2e2" stroke-width="1.50"><path d="M2.5 22 V2.5 H22.5" stroke="#7f5fc0" stroke-width="1.6"/><path d="M6.0 2.5 V0 M9.6 2.5 V0 M13.2 2.5 V0 M16.8 2.5 V0 M20.4 2.5 V0 M2.5 6.0 H0 M2.5 9.6 H0 M2.5 13.2 H0 M2.5 16.8 H0 M2.5 20.4 H0 " stroke="#7f5fc0" stroke-width="1.2"/><path d="M10 9.5 V20 M13.3 9.5 V20 M16.6 9.5 V20 M19.9 9.5 V20 M7 19.5 L23 11" stroke-width="1.4"/></svg>
<div class="bl" style="left:0px;top:935px;width:38.6px;height:38px"></div>
<svg class="ic" style="left:7.0px;top:942.6px" width="24.0" height="24.0" viewBox="0 0 24 24" fill="none" stroke="#e2e2e2" stroke-width="1.60"><path d="M9.1 6.4 H21.1 M9.1 12 H21.1 M9.1 17.7 H21.1" stroke="#fff" stroke-width="2.2"/><g fill="#fff" stroke="none"><rect x="3" y="4.9" width="3" height="3"/><rect x="3" y="10.5" width="3" height="3"/><rect x="3" y="16.2" width="3" height="3"/></g></svg>
<svg class="ic" style="left:46.0px;top:942.3px" width="24.0" height="24.0" viewBox="0 0 24 24" fill="none" stroke="#565656" stroke-width="1.40"><rect x="2.9" y="2.9" width="18.2" height="18.2"/><path d="M2.9 5 H21.1" stroke-width="1"/></svg>
<svg class="ic" style="left:84.6px;top:942.3px" width="24.0" height="24.0" viewBox="0 0 24 24" fill="none" stroke="#e2e2e2" stroke-width="1.50"><rect x="2.9" y="2.9" width="18.2" height="18.2"/><path d="M12 2.9 V21.1"/><path d="M2.9 5 H21.1" stroke-width="1"/></svg>
<svg class="ic" style="left:123.0px;top:942.3px" width="24.0" height="24.0" viewBox="0 0 24 24" fill="none" stroke="#e2e2e2" stroke-width="1.40"><rect x="2.9" y="2.9" width="18.2" height="18.2"/><path d="M2.9 11 H21.1 M2.9 13 H21.1"/><path d="M2.9 5 H21.1" stroke-width="1"/></svg>
<div style="left:157px;top:945px;width:1px;height:19px;background:#6a6a6a"></div>
<svg class="ic" style="left:166.5px;top:942.8px" width="24.0" height="24.0" viewBox="0 0 24 24" fill="none" stroke="#e2e2e2" stroke-width="1.50"><path d="M5 2.5 H14 L19 7.5 V21.5 H5 Z M14 2.5 V7.5 H19"/><path d="M12 10 V19.5 M7.5 14.7 H16.5" stroke-width="1.2"/><path d="M12 8.5 L14.2 11.2 H9.8 Z M12 21 L14.2 18.3 H9.8 Z M6 14.7 L8.7 12.5 V16.9 Z M18 14.7 L15.3 12.5 V16.9 Z" fill="#e2e2e2" stroke="none"/></svg>
<svg class="ic" style="left:205.3px;top:942.8px" width="24.0" height="24.0" viewBox="0 0 24 24" fill="none" stroke="#e2e2e2" stroke-width="1.50"><path d="M5 3 H19 M5 1 V5 M19 1 V5" stroke-width="1.3"/><path d="M5 21.5 V8.5 H14 L19 13.5 V21.5 M14 8.5 V13.5 H19"/><path d="M8 19.5 H16" stroke-width="1.2"/><path d="M6 19.5 L9 17.5 V21.5 Z M18 19.5 L15 17.5 V21.5 Z" fill="#e2e2e2" stroke="none"/></svg>
<div class="bl" style="left:413px;top:935px;width:38.8px;height:38px"></div>
<svg class="ic" style="left:420.5px;top:942.5px" width="24.0" height="24.0" viewBox="0 0 24 24" fill="none" stroke="#e2e2e2" stroke-width="1.50"><path d="M8 13 V5.5 a1.5 1.5 0 0 1 3 0 V11 V3.8 a1.5 1.5 0 0 1 3 0 V11 V4.8 a1.5 1.5 0 0 1 3 0 V12 V7.5 a1.4 1.4 0 0 1 2.8 0 V15 C19.8 19 17.5 22 13.5 22 C10 22 8.5 20.5 6.5 17.5 L3.2 12.6 a1.5 1.5 0 0 1 2.4 -1.6 Z"/></svg>
<svg class="ic" style="left:459.5px;top:943.5px" width="24.0" height="24.0" viewBox="0 0 24 24" fill="none" stroke="#e2e2e2" stroke-width="1.50"><path d="M5.5 2.5 V19 L10 15 L13 21.5 L15.5 20.5 L12.8 14 H18 Z"/></svg>
<svg class="ic" style="left:496.0px;top:943.0px" width="24.0" height="24.0" viewBox="0 0 24 24" fill="none" stroke="#e2e2e2" stroke-width="1.50"><path d="M3 2.5 H9 M3 21.5 H9 M6 2.5 V21.5"/><text x="17" y="18" font-size="13" text-anchor="middle" fill="#e2e2e2" stroke="none" font-family="Liberation Sans,sans-serif">A</text></svg>
<svg class="ic" style="left:536.0px;top:943.0px" width="24.0" height="24.0" viewBox="0 0 24 24" fill="none" stroke="#e2e2e2" stroke-width="1.50"><circle cx="9.5" cy="9" r="6.8"/><path d="M14.5 14 L22 21.5 M6.5 8 H12.5 M9.5 5 V11 M6.5 12.3 H12.5" stroke-width="1.4"/></svg>
<svg class="ic" style="left:574.3px;top:943.0px" width="24.0" height="24.0" viewBox="0 0 24 24" fill="none" stroke="#5e5e5e" stroke-width="1.40"><path d="M7.5 6.5 V17.5 M16.5 6.5 L9.5 12 L16.5 17.5 Z"/></svg>
<svg class="ic" style="left:613.0px;top:943.0px" width="24.0" height="24.0" viewBox="0 0 24 24" fill="none" stroke="#5e5e5e" stroke-width="1.40"><path d="M15.5 7 L9 12 L15.5 17 Z"/></svg>
<svg class="ic" style="left:925.5px;top:943.0px" width="24.0" height="24.0" viewBox="0 0 24 24" fill="none" stroke="#5e5e5e" stroke-width="1.40"><path d="M8.5 7 L15 12 L8.5 17 Z"/></svg>
<svg class="ic" style="left:964.8px;top:943.0px" width="24.0" height="24.0" viewBox="0 0 24 24" fill="none" stroke="#5e5e5e" stroke-width="1.40"><path d="M16.5 6.5 V17.5 M7.5 6.5 L14.5 12 L7.5 17.5 Z"/></svg>
<div style="left:997.5px;top:945px;width:1.5px;height:20px;background:#6a6a6a"></div>
<svg class="ic" style="left:1007.0px;top:943.0px" width="24.0" height="24.0" viewBox="0 0 24 24" fill="none" stroke="#e2e2e2" stroke-width="1.60"><circle cx="12" cy="12" r="9.3"/><path d="M14.5 7.5 L8.5 12 L14.5 16.5 Z" stroke-width="1.4"/></svg>
<svg class="ic" style="left:1046.0px;top:943.0px" width="24.0" height="24.0" viewBox="0 0 24 24" fill="none" stroke="#5e5e5e" stroke-width="1.50"><circle cx="12" cy="12" r="9.3"/><path d="M9.5 7.5 L15.5 12 L9.5 16.5 Z" stroke-width="1.4"/></svg>
<svg class="ic" style="left:968.5px;top:982.0px" width="24.0" height="24.0" viewBox="0 0 24 24" fill="none" stroke="#e2e2e2" stroke-width="1.50"><path d="M7 2.5 V21.5 M12 2.5 V21.5 M17 2.5 V21.5 M2.5 7 H21.5 M2.5 12 H21.5 M2.5 17 H21.5"/></svg>
<div class="bl" style="left:1000.3px;top:975px;width:38.4px;height:38px"></div>
<div class="bl" style="left:1039px;top:975px;width:38.2px;height:38px"></div>
<div class="bl" style="left:1077.6px;top:975px;width:38.2px;height:38px"></div>
<div class="bl" style="left:1154.3px;top:975px;width:39px;height:38px"></div>
<svg class="ic" style="left:1007.0px;top:982.0px" width="24.0" height="24.0" viewBox="0 0 24 24" fill="none" stroke="#e2e2e2" stroke-width="1.60"><path d="M7 2.5 V20 M12 2.5 V9 M17 2.5 V9 M2.5 7 H21.5 M2.5 12 H9 M2.5 17 H9" stroke-width="1.5"/><path d="M11 11 H17.5 A4.2 4.2 0 0 1 17.5 21.5 H12 M12 14.5 H17.5 A1.6 1.6 0 0 1 17.5 18 H12" stroke-width="1.5"/></svg>
<svg class="ic" style="left:1046.5px;top:982.0px" width="24.0" height="24.0" viewBox="0 0 24 24" fill="none" stroke="#e2e2e2" stroke-width="1.60"><path d="M10 21.5 H4.5 V2.5 H13.5 L18.5 7.5 V9 M13.5 2.5 V7.5 H18.5" stroke-width="1.5"/><path d="M11 11 H17.5 A4.2 4.2 0 0 1 17.5 21.5 H12 M12 14.5 H17.5 A1.6 1.6 0 0 1 17.5 18 H12" stroke-width="1.5"/></svg>
<svg class="ic" style="left:1085.0px;top:982.0px" width="24.0" height="24.0" viewBox="0 0 24 24" fill="none" stroke="#e2e2e2" stroke-width="1.60"><path d="M3 20.5 L6 15 L15 3 L21 7.5 L19 10 M6 15 L9 17.5" stroke-width="1.5"/><path d="M2 22 L4 19.5" stroke-width="2.2"/><path d="M11 11 H17.5 A4.2 4.2 0 0 1 17.5 21.5 H12 M12 14.5 H17.5 A1.6 1.6 0 0 1 17.5 18 H12" stroke-width="1.5"/></svg>
<svg class="ic" style="left:1123.0px;top:982.0px" width="24.0" height="24.0" viewBox="0 0 24 24" fill="none" stroke="#e2e2e2" stroke-width="1.60"><path d="M3 20.5 L6 15 L15 3 L21 7.5 L17.5 12 M6 15 L10 18" stroke-width="1.5"/><path d="M2 22 L4 19.5" stroke-width="2.2"/><path d="M19.5 13.5 A4.2 4.2 0 1 1 14.5 13" stroke="#1a7fd8" stroke-width="1.7"/><path d="M17.5 10.5 L20 13.8 L16.5 15" stroke="#1a7fd8" stroke-width="1.4"/></svg>
<svg class="ic" style="left:1161.5px;top:982.0px" width="24.0" height="24.0" viewBox="0 0 24 24" fill="none" stroke="#e2e2e2" stroke-width="1.60"><rect x="2.5" y="3" width="19" height="18" stroke-width="1.5"/><path d="M2.5 6.5 H21.5" stroke-width="1.3"/><path d="M6.5 11.5 H17 M14.5 9 L17.2 11.5 L14.5 14 M17.5 16.8 H7 M9.5 14.3 L6.8 16.8 L9.5 19.3" stroke-width="1.3"/></svg>
<svg class="ic" style="left:1194.5px;top:988.5px" width="12.0" height="12.0" viewBox="0 0 12 12" fill="none" stroke="#e2e2e2" stroke-width="1.70"><path d="M1.5 3.5 L6 8 L10.5 3.5"/></svg>
<div style="left:1465px;top:9.5px;width:18px;height:1.6px;background:#f0f0f0"></div>
<svg class="ic" style="left:1512.0px;top:-1.5px" width="24.0" height="24.0" viewBox="0 0 24 24" fill="none" stroke="#f0f0f0" stroke-width="1.40"><rect x="3.5" y="7.5" width="12" height="12.5" rx="1"/><path d="M7.5 7.5 V4.5 Q7.5 3.5 8.5 3.5 H19 Q20 3.5 20 4.5 V15 Q20 16 19 16 H15.5"/></svg>
<svg class="ic" style="left:1562.5px;top:-1.5px" width="24.0" height="24.0" viewBox="0 0 24 24" fill="none" stroke="#f0f0f0" stroke-width="1.60"><path d="M4.2 4.2 L19.8 19.8 M19.8 4.2 L4.2 19.8"/></svg>
<svg class="ic" style="left:1221px;top:-1.2px" width="25.4" height="25.4" viewBox="0 0 24 24"><circle cx="12" cy="12" r="11.6" fill="#fff"/><path d="M4.2 19.5 C3.8 12 7 6.5 14.5 3.2 C18.5 2.2 21.8 4.6 21.5 7.8 C21.2 10.6 18.5 11.8 15.5 12.2 C19.5 13 22 16.5 21.2 20.2 C18.2 17 15.2 15 11.2 14.6 C10.2 17 10.6 19.8 11.8 23.4 C8.8 23 6 21.6 4.2 19.5 Z" fill="#000"/><path d="M12.3 8.6 C13.8 7.2 16.3 6.3 17.8 7.2 C17.2 8.8 14.6 9.7 11.7 10 Z" fill="#fff"/></svg>
<div style="left:8px;top:28.5px;width:46.5px;height:26px;border:1.3px solid #676767;border-radius:4.5px"></div>
<svg class="ic" style="left:9.5px;top:30.3px" width="24.0" height="24.0" viewBox="0 0 24 24" fill="none" stroke="#e2e2e2" stroke-width="1.60"><path d="M5.5 2.5 H13 L18.5 8 V21.5 H5.5 Z M13 2.5 V8 H18.5" stroke-width="1.5"/><rect x="8.8" y="13.2" width="5.2" height="5.2" stroke-width="1.2"/><rect x="10.7" y="15.1" width="1.4" height="1.4" fill="#e2e2e2" stroke="none"/></svg>
<svg class="ic" style="left:39.3px;top:36.5px" width="12.0" height="12.0" viewBox="0 0 12 12" fill="none" stroke="#e2e2e2" stroke-width="1.60"><path d="M1.5 3.8 L6 8.3 L10.5 3.8"/></svg>
<svg class="ic" style="left:1529.0px;top:76.5px" width="12.0" height="12.0" viewBox="0 0 12 12" fill="none" stroke="#e2e2e2" stroke-width="1.60"><path d="M1.5 3.8 L6 8.3 L10.5 3.8"/></svg>
<div id="menu"></div>
<div class="sep" style="left:255px;top:51.0px;width:225px"></div>
<div class="sep" style="left:263px;top:321.3px;width:217px"></div>
<div class="sep" style="left:263px;top:437.1px;width:217px"></div>
<div class="sep" style="left:263px;top:468.3px;width:217px"></div>
<div class="sep" style="left:263px;top:499.3px;width:217px"></div>
<div class="sep" style="left:263px;top:557.1px;width:217px"></div>
<div class="sep" style="left:263px;top:641.3px;width:217px"></div>
<svg class="mi" fill="none" style="left:246px;top:22.6px" width="24" height="24" viewBox="0 0 24 24"><circle cx="12" cy="13.2" r="9.3" stroke="#e4e4e4" stroke-width="1.7"/><text x="12" y="18.4" font-family="Liberation Serif,serif" font-style="italic" font-weight="700" font-size="15" text-anchor="middle" fill="#e4e4e4" stroke="none">i</text></svg>
<span class="t" style="left:281px;top:26.20px;font-size:14px;line-height:16.80px;color:#f0f0f0;letter-spacing:-0.343px;">Document Properties</span>
<span class="t" style="left:428.8px;top:26.20px;font-size:14px;line-height:16.80px;color:#f0f0f0;letter-spacing:-0.644px;">Ctrl+D</span>
<svg class="mi" fill="none" style="left:246px;top:54.0px" width="24" height="24" viewBox="0 0 24 24"><path d="M4.7 3.5 H13.5 L19.2 9 V13 M13.5 3.5 V9 H19.2 M4.7 3.5 V22.3 H14" stroke="#e4e4e4" stroke-width="1.5"/><path d="M14 15 L20.8 21.8" stroke="#d8b03a" stroke-width="3.2" stroke-linecap="round"/><circle cx="12.7" cy="13.7" r="3.7" fill="#d8b03a"/><path d="M12.4 13.4 L8.5 9.5" stroke="#3d3d3d" stroke-width="2.5"/></svg>
<span class="t" style="left:281px;top:57.60px;font-size:14px;line-height:16.80px;color:#f0f0f0;letter-spacing:-0.501px;">Page Set-up...</span>
<svg class="mi" fill="none" style="left:246px;top:80.3px" width="24" height="24" viewBox="0 0 24 24"><path d="M5.2 3 H2 V21.5 H5.2" stroke="#e4e4e4" stroke-width="1.5"/><path d="M7.5 3 H16 L21.3 8.3 V21.5 H7.5 Z M16 3 V8.3 H21.3" stroke="#e4e4e4" stroke-width="1.5"/><circle cx="17.5" cy="17.5" r="4.2" stroke="#3d3d3d" stroke-width="4.5"/><path d="M20.8 14.8 A4.3 4.3 0 1 0 21.8 17.8" stroke="#d8b03a" stroke-width="1.6"/><path d="M18.3 12.2 L21.6 15 L18.2 16.6" stroke="#d8b03a" stroke-width="1.4" /></svg>
<span class="t" style="left:281px;top:83.90px;font-size:14px;line-height:16.80px;color:#f0f0f0;letter-spacing:-0.434px;">Rotate Pages...</span>
<span class="t" style="left:394px;top:83.90px;font-size:14px;line-height:16.80px;color:#f0f0f0;letter-spacing:-0.438px;">Ctrl+Shift+R</span>
<span class="t" style="left:281px;top:110.60px;font-size:14px;line-height:16.80px;color:#f0f0f0;letter-spacing:-0.253px;">Insert</span>
<svg class="mi" fill="none" style="left:475px;top:113.5px" width="10" height="13" viewBox="0 0 10 13"><path d="M2 1.5 L7 6.5 L2 11.5" stroke="#e8e8e8" stroke-width="1.5" fill="none"/></svg>
<svg class="mi" fill="none" style="left:246px;top:133.8px" width="24" height="24" viewBox="0 0 24 24"><path d="M5.2 3 H2 V21.5 H5.2" stroke="#e4e4e4" stroke-width="1.5"/><path d="M7.5 3 H16 L21.3 8.3 V21.5 H7.5 Z M16 3 V8.3 H21.3" stroke="#e4e4e4" stroke-width="1.5"/><path d="M12.5 15.5 H23" stroke="#3d3d3d" stroke-width="5"/><path d="M12.5 15.5 H22.5 M19 12 L22.5 15.5 L19 19" stroke="#d8b03a" stroke-width="1.5"/></svg>
<span class="t" style="left:281px;top:137.40px;font-size:14px;line-height:16.80px;color:#f0f0f0;letter-spacing:-0.427px;">Extract Pages...</span>
<span class="t" style="left:394px;top:137.40px;font-size:14px;line-height:16.80px;color:#f0f0f0;letter-spacing:-0.374px;">Ctrl+Shift+X</span>
<span class="t" style="left:281px;top:164.20px;font-size:14px;line-height:16.80px;color:#f0f0f0;letter-spacing:-0.33px;">Split Document...</span>
<svg class="mi" fill="none" style="left:246px;top:187.0px" width="24" height="24" viewBox="0 0 24 24"><path d="M5.2 3 H2 V21.5 H5.2" stroke="#e4e4e4" stroke-width="1.5"/><path d="M7.5 3 H16 L21.3 8.3 V21.5 H7.5 Z M16 3 V8.3 H21.3" stroke="#e4e4e4" stroke-width="1.5"/><path d="M12.5 15.5 H23" stroke="#3d3d3d" stroke-width="5"/><path d="M22.5 15.5 H12.5 M16 12 L12.5 15.5 L16 19" stroke="#d8b03a" stroke-width="1.5"/></svg>
<span class="t" style="left:281px;top:190.60px;font-size:14px;line-height:16.80px;color:#f0f0f0;letter-spacing:-0.564px;">Replace Pages...</span>
<span class="t" style="left:394px;top:190.60px;font-size:14px;line-height:16.80px;color:#f0f0f0;letter-spacing:-0.374px;">Ctrl+Shift+Y</span>
<svg class="mi" fill="none" style="left:246px;top:213.6px" width="24" height="24" viewBox="0 0 24 24"><path d="M5.2 3 H2 V21.5 H5.2" stroke="#6b6b6b" stroke-width="1.5"/><path d="M7.5 3 H16 L21.3 8.3 V21.5 H7.5 Z M16 3 V8.3 H21.3" stroke="#6b6b6b" stroke-width="1.5"/><rect x="15" y="14" width="9" height="9" fill="#3d3d3d" stroke="none"/><path d="M16.5 15.5 L22 21 M22 15.5 L16.5 21" stroke="#6b6b6b" stroke-width="1.3"/></svg>
<span class="t" style="left:281px;top:217.20px;font-size:14px;line-height:16.80px;color:#777;letter-spacing:-0.449px;">Delete Pages...</span>
<span class="t" style="left:393px;top:217.20px;font-size:14px;line-height:16.80px;color:#777;letter-spacing:-0.354px;">Ctrl+Shift+D</span>
<svg class="mi" fill="none" style="left:246px;top:240.3px" width="24" height="24" viewBox="0 0 24 24"><path d="M6.5 1.5 V18.5 H23 M1.5 6.5 H18.5 V23 M6.5 18.5 L22 3" stroke="#e4e4e4" stroke-width="1.5"/></svg>
<span class="t" style="left:281px;top:243.90px;font-size:14px;line-height:16.80px;color:#f0f0f0;letter-spacing:-0.547px;">Crop Pages...</span>
<span class="t" style="left:398px;top:243.90px;font-size:14px;line-height:16.80px;color:#f0f0f0;letter-spacing:-0.418px;">Shift+Alt+O</span>
<svg class="mi" fill="none" style="left:246px;top:267.0px" width="24" height="24" viewBox="0 0 24 24"><path d="M5.2 3 H2 V21.5 H5.2" stroke="#e4e4e4" stroke-width="1.5"/><path d="M7.5 3 H16 L21.3 8.3 V21.5 H7.5 Z M16 3 V8.3 H21.3" stroke="#e4e4e4" stroke-width="1.5"/><path d="M12.3 13.2 H19.7 M11.8 16.8 H19.2 M14.8 10.8 L13.6 19.2 M18.2 10.8 L17 19.2" stroke="#d8b03a" stroke-width="1.4"/></svg>
<span class="t" style="left:281px;top:270.60px;font-size:14px;line-height:16.80px;color:#f0f0f0;letter-spacing:-0.431px;">Number Pages...</span>
<svg class="mi" fill="none" style="left:246px;top:293.5px" width="24" height="24" viewBox="0 0 24 24"><path d="M2.5 2 V9.5 H21.5 V2" stroke="#e4e4e4" stroke-width="1.5"/><path d="M12 13 V23 M7 18 H17 M8.5 14.5 L15.5 21.5 M15.5 14.5 L8.5 21.5" stroke="#d8b03a" stroke-width="1.3"/><circle cx="12" cy="18" r="1.6" fill="#3d3d3d" stroke="none"/></svg>
<span class="t" style="left:281px;top:297.10px;font-size:14px;line-height:16.80px;color:#f0f0f0;letter-spacing:-0.449px;">Create Page Labels...</span>
<svg class="mi" fill="none" style="left:246px;top:324.8px" width="24" height="24" viewBox="0 0 24 24"><path d="M4.5 2.5 H14.5 L19.5 7.5 V21.5 H4.5 Z M14.5 2.5 V7.5 H19.5" stroke="#e4e4e4" stroke-width="1.5"/><path d="M5.5 18 H18.5" stroke="#d8b03a" stroke-width="2"/></svg>
<span class="t" style="left:281px;top:328.40px;font-size:14px;line-height:16.80px;color:#f0f0f0;letter-spacing:-0.448px;">Headers  Footers</span>
<svg class="mi" fill="none" style="left:475px;top:331.3px" width="10" height="13" viewBox="0 0 10 13"><path d="M2 1.5 L7 6.5 L2 11.5" stroke="#e8e8e8" stroke-width="1.5" fill="none"/></svg>
<svg class="mi" fill="none" style="left:246px;top:351.5px" width="24" height="24" viewBox="0 0 24 24"><rect x="4.5" y="11" width="15" height="11" stroke="#e4e4e4" stroke-width="1.6"/><path d="M7.5 11 V7.5 A4.5 4.5 0 0 1 16.5 7.5 V11" stroke="#e4e4e4" stroke-width="1.6"/></svg>
<span class="t" style="left:281px;top:355.10px;font-size:14px;line-height:16.80px;color:#f0f0f0;letter-spacing:-0.309px;">Security...</span>
<span class="t" style="left:429px;top:355.10px;font-size:14px;line-height:16.80px;color:#f0f0f0;letter-spacing:-0.289px;">Ctrl+L</span>
<div style="left:242.3px;top:379.9px;width:240.7px;height:24.1px;background:#20608f;border:4px solid #fcc536"></div>
<svg class="mi" fill="none" style="left:469px;top:386.5px" width="16" height="16" viewBox="0 0 16 16"><path d="M4.5 1.5 H11.5 M5.8 1.5 V6.5 L4 9.2 H12 L10.2 6.5 V1.5 M8 9.2 V14" stroke="#e8e8e8" stroke-width="1.1" fill="none"/></svg>
<svg class="mi" fill="none" style="left:246px;top:382.5px" width="24" height="24" viewBox="0 0 24 24"><path d="M1.5 2.5 H6 L10 6.5 V21.5 H1.5 M6 2.5 V6.5 H10" stroke="#cfe0ee" stroke-width="1.4"/><path d="M22.5 3 H15 Q13.5 3 13.5 4.5 V20 Q13.5 21.5 15 21.5 H22.5" stroke="#cfe0ee" stroke-width="1.4"/><text x="5" y="20" font-size="9.5" font-weight="700" text-anchor="middle" fill="#d8b03a" stroke="none">A</text><text x="19.2" y="19.5" font-size="9.5" font-weight="700" text-anchor="middle" fill="#d8b03a" stroke="none">B</text></svg>
<span class="t" style="left:281px;top:386.10px;font-size:14px;line-height:16.80px;color:#fff;letter-spacing:-0.368px;">Compare Documents...</span>
<svg class="mi" fill="none" style="left:246px;top:409.6px" width="24" height="24" viewBox="0 0 24 24"><path d="M5.2 3 H2 V21.5 H5.2" stroke="#e4e4e4" stroke-width="1.5"/><path d="M7.5 3 H16 L21.3 8.3 V21.5 H7.5 Z M16 3 V8.3 H21.3" stroke="#e4e4e4" stroke-width="1.5"/><path d="M11.5 19 V15.5 H14 V19 M14 19 V13 H16.5 V19 M16.5 19 V11 H19 V19 Z" stroke="#d8b03a" stroke-width="1.2"/></svg>
<span class="t" style="left:281px;top:413.20px;font-size:14px;line-height:16.80px;color:#f0f0f0;letter-spacing:-0.55px;">Overlay Pages...</span>
<svg class="mi" fill="none" style="left:246px;top:440.4px" width="24" height="24" viewBox="0 0 24 24"><path d="M4.5 12 V2.5 H14 L19 7.5 V12 M14 2.5 V7.5 H19" stroke="#e4e4e4" stroke-width="1.5"/><text x="12" y="22.5" font-size="9.6" font-weight="700" text-anchor="middle" fill="#d8b03a" stroke="none" textLength="20" lengthAdjust="spacingAndGlyphs">OCR</text></svg>
<span class="t" style="left:281px;top:444.00px;font-size:14px;line-height:16.80px;color:#f0f0f0;letter-spacing:-1.064px;">OCR...</span>
<span class="t" style="left:393px;top:444.00px;font-size:14px;line-height:16.80px;color:#f0f0f0;letter-spacing:-0.419px;">Ctrl+Shift+O</span>
<svg class="mi" fill="none" style="left:246px;top:471.8px" width="24" height="24" viewBox="0 0 24 24"><path d="M6.5 18.5 V5 Q6.5 2.5 9 2.5 H20 Q22 2.5 22 4.5 V6.5 H18.5 M18.5 4.5 V19 Q18.5 22 15.5 22 H4.5 Q2 22 2 19.8 V18.5 H15 V20 Q15 22 16.5 21.8" stroke="#e4e4e4" stroke-width="1.4"/></svg>
<span class="t" style="left:281px;top:475.40px;font-size:14px;line-height:16.80px;color:#f0f0f0;letter-spacing:-0.352px;">Script...</span>
<svg class="mi" fill="none" style="left:246px;top:502.6px" width="24" height="24" viewBox="0 0 24 24"><text x="5.5" y="10" font-size="12" font-weight="700" text-anchor="middle" fill="#e4e4e4" stroke="none">a</text><text x="17.5" y="22" font-family="Noto Sans CJK SC,Liberation Sans,sans-serif" font-size="11" text-anchor="middle" fill="#e4e4e4" stroke="none">文</text><path d="M13 4.5 H17 Q20 4.5 20 8 M15.5 2 L13 4.5 L15.5 7 M4 13 Q4 17.5 8 17.5 H10 M8 15 L10.5 17.5 L8 20" stroke="#e4e4e4" stroke-width="1.3"/></svg>
<span class="t" style="left:281px;top:506.20px;font-size:14px;line-height:16.80px;color:#f0f0f0;letter-spacing:-0.325px;">Translate Markups...</span>
<svg class="mi" fill="none" style="left:246px;top:529.2px" width="24" height="24" viewBox="0 0 24 24"><circle cx="12" cy="8.2" r="5.8" stroke="#e4e4e4" stroke-width="1.5"/><circle cx="8" cy="15.5" r="5.8" stroke="#e4e4e4" stroke-width="1.5"/><circle cx="16" cy="15.5" r="5.8" stroke="#e4e4e4" stroke-width="1.5"/></svg>
<span class="t" style="left:281px;top:532.80px;font-size:14px;line-height:16.80px;color:#f0f0f0;letter-spacing:-0.453px;">Colour Processing...</span>
<svg class="mi" fill="none" style="left:246px;top:560.3px" width="24" height="24" viewBox="0 0 24 24"><path d="M3 2.5 H22 M3 5 H22 M5 8 H15 M4 10.5 H22 V13.5 H4 Z M4 16 H22 M12 16 V21 M7 22 H18 M15 2.5 V10" stroke="#e4e4e4" stroke-width="1.4"/><rect x="5" y="5" width="9" height="5" fill="#e4e4e4" stroke="none"/></svg>
<span class="t" style="left:281px;top:563.90px;font-size:14px;line-height:16.80px;color:#f0f0f0;letter-spacing:-0.563px;">Reduce File Size...</span>
<span class="t" style="left:281px;top:590.40px;font-size:14px;line-height:16.80px;color:#f0f0f0;letter-spacing:-0.712px;">Repair PDF...</span>
<svg class="mi" fill="none" style="left:246px;top:613.4px" width="24" height="24" viewBox="0 0 24 24"><path d="M4.5 21.5 V2.5 H13 L18 7.5 V11 M13 2.5 V7.5 H18 M4.5 21.5 H13" stroke="#e4e4e4" stroke-width="1.4"/><rect x="8" y="13.5" width="5" height="5" stroke="#e4e4e4" stroke-width="1.2"/><rect x="9.8" y="15.3" width="1.4" height="1.4" fill="#e4e4e4" stroke="none"/><text x="19.5" y="22" font-size="10" font-weight="700" text-anchor="middle" fill="#d8b03a" stroke="none">A</text></svg>
<span class="t" style="left:281px;top:617.00px;font-size:14px;line-height:16.80px;color:#f0f0f0;letter-spacing:-0.456px;">Archive as PDF/A...</span>
<svg class="mi" fill="none" style="left:246px;top:644.3px" width="24" height="24" viewBox="0 0 24 24"><path d="M8 8 H16 L20 19.5 H4 Z" stroke="#d8b03a" stroke-width="1.5"/><circle cx="12" cy="5.5" r="2.4" stroke="#d8b03a" stroke-width="1.4"/><path d="M2.5 22.5 H21.5" stroke="#e4e4e4" stroke-width="1.5"/></svg>
<span class="t" style="left:281px;top:647.90px;font-size:14px;line-height:16.80px;color:#f0f0f0;letter-spacing:-0.247px;">Flatten...</span>
<span class="t" style="left:390.3px;top:647.90px;font-size:14px;line-height:16.80px;color:#f0f0f0;letter-spacing:-0.259px;">Ctrl+Shift+M</span>
<svg class="mi" fill="none" style="left:246px;top:671.2px" width="24" height="24" viewBox="0 0 24 24"><path d="M4 3 L6 12.5 H18 L20 3" stroke="#d8b03a" stroke-width="1.5"/><path d="M2.5 22.5 H21.5 M12 21 V14.5 M9 17.5 L12 14.5 L15 17.5" stroke="#e4e4e4" stroke-width="1.5"/></svg>
<span class="t" style="left:281px;top:674.80px;font-size:14px;line-height:16.80px;color:#f0f0f0;letter-spacing:-0.205px;">Unflatten</span>
<span class="t" style="left:393px;top:674.80px;font-size:14px;line-height:16.80px;color:#f0f0f0;letter-spacing:-0.354px;">Ctrl+Shift+U</span>
</body></html>
